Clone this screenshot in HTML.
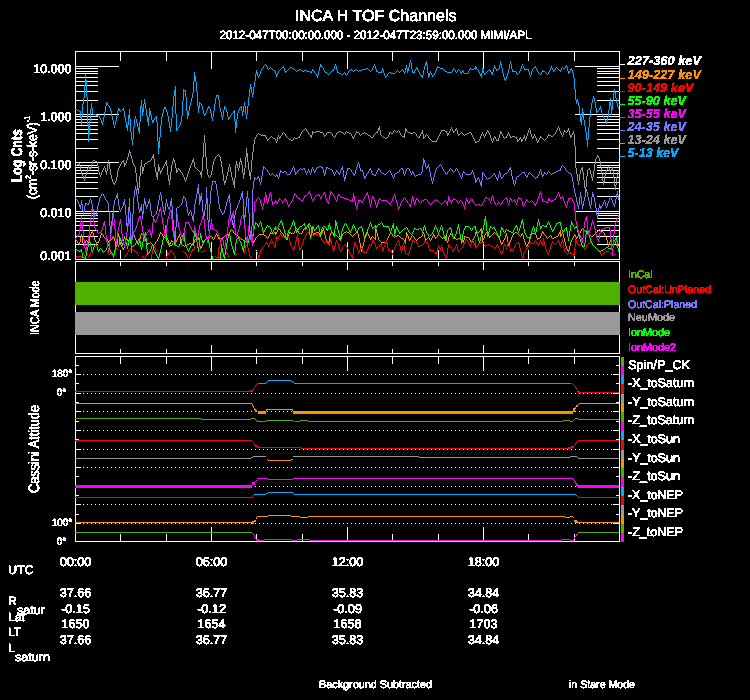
<!DOCTYPE html>
<html lang="en">
<head>
<meta charset="utf-8">
<title>INCA H TOF Channels</title>
<style>
html,body{margin:0;padding:0;background:#000;}
body{width:750px;height:700px;overflow:hidden;}
svg{display:block;}
svg text{text-rendering:geometricPrecision;font-family:"Liberation Sans",sans-serif;fill:#fff;stroke:#fff;stroke-width:0.7px;stroke-linejoin:round;}
svg text.bi{font-weight:bold;font-style:italic;stroke-width:0.3px;}
svg text.b{font-weight:bold;stroke-width:0.6px;}
.crisp{shape-rendering:crispEdges;}
.data path{fill:none;stroke-width:1;stroke-linecap:butt;}
</style>
</head>
<body>
<svg width="750" height="700" viewBox="0 0 750 700">
<rect width="750" height="700" fill="#000"/>
<g class="crisp" id="axes">
<rect x="75" y="51" width="545" height="1" fill="#fff"/>
<rect x="75" y="259" width="545" height="1" fill="#fff"/>
<rect x="75" y="51" width="1" height="209" fill="#fff"/>
<rect x="619" y="51" width="1" height="209" fill="#fff"/>
<rect x="120" y="51" width="1" height="10" fill="#fff"/>
<rect x="120" y="250" width="1" height="10" fill="#fff"/>
<rect x="166" y="51" width="1" height="10" fill="#fff"/>
<rect x="166" y="250" width="1" height="10" fill="#fff"/>
<rect x="211" y="51" width="1" height="18" fill="#fff"/>
<rect x="211" y="242" width="1" height="18" fill="#fff"/>
<rect x="256" y="51" width="1" height="10" fill="#fff"/>
<rect x="256" y="250" width="1" height="10" fill="#fff"/>
<rect x="302" y="51" width="1" height="10" fill="#fff"/>
<rect x="302" y="250" width="1" height="10" fill="#fff"/>
<rect x="347" y="51" width="1" height="18" fill="#fff"/>
<rect x="347" y="242" width="1" height="18" fill="#fff"/>
<rect x="392" y="51" width="1" height="10" fill="#fff"/>
<rect x="392" y="250" width="1" height="10" fill="#fff"/>
<rect x="438" y="51" width="1" height="10" fill="#fff"/>
<rect x="438" y="250" width="1" height="10" fill="#fff"/>
<rect x="483" y="51" width="1" height="18" fill="#fff"/>
<rect x="483" y="242" width="1" height="18" fill="#fff"/>
<rect x="528" y="51" width="1" height="10" fill="#fff"/>
<rect x="528" y="250" width="1" height="10" fill="#fff"/>
<rect x="574" y="51" width="1" height="10" fill="#fff"/>
<rect x="574" y="250" width="1" height="10" fill="#fff"/>
<rect x="75" y="261" width="545" height="1" fill="#fff"/>
<rect x="75" y="353" width="545" height="1" fill="#fff"/>
<rect x="75" y="261" width="1" height="93" fill="#fff"/>
<rect x="619" y="261" width="1" height="93" fill="#fff"/>
<rect x="120" y="261" width="1" height="5" fill="#fff"/>
<rect x="120" y="349" width="1" height="5" fill="#fff"/>
<rect x="166" y="261" width="1" height="5" fill="#fff"/>
<rect x="166" y="349" width="1" height="5" fill="#fff"/>
<rect x="211" y="261" width="1" height="9" fill="#fff"/>
<rect x="211" y="345" width="1" height="9" fill="#fff"/>
<rect x="256" y="261" width="1" height="5" fill="#fff"/>
<rect x="256" y="349" width="1" height="5" fill="#fff"/>
<rect x="302" y="261" width="1" height="5" fill="#fff"/>
<rect x="302" y="349" width="1" height="5" fill="#fff"/>
<rect x="347" y="261" width="1" height="9" fill="#fff"/>
<rect x="347" y="345" width="1" height="9" fill="#fff"/>
<rect x="392" y="261" width="1" height="5" fill="#fff"/>
<rect x="392" y="349" width="1" height="5" fill="#fff"/>
<rect x="438" y="261" width="1" height="5" fill="#fff"/>
<rect x="438" y="349" width="1" height="5" fill="#fff"/>
<rect x="483" y="261" width="1" height="9" fill="#fff"/>
<rect x="483" y="345" width="1" height="9" fill="#fff"/>
<rect x="528" y="261" width="1" height="5" fill="#fff"/>
<rect x="528" y="349" width="1" height="5" fill="#fff"/>
<rect x="574" y="261" width="1" height="5" fill="#fff"/>
<rect x="574" y="349" width="1" height="5" fill="#fff"/>
<rect x="75" y="356" width="545" height="1" fill="#fff"/>
<rect x="75" y="541" width="545" height="1" fill="#fff"/>
<rect x="75" y="356" width="1" height="186" fill="#fff"/>
<rect x="619" y="356" width="1" height="186" fill="#fff"/>
<rect x="120" y="356" width="1" height="8" fill="#fff"/>
<rect x="120" y="534" width="1" height="8" fill="#fff"/>
<rect x="166" y="356" width="1" height="8" fill="#fff"/>
<rect x="166" y="534" width="1" height="8" fill="#fff"/>
<rect x="211" y="356" width="1" height="15" fill="#fff"/>
<rect x="211" y="527" width="1" height="15" fill="#fff"/>
<rect x="256" y="356" width="1" height="8" fill="#fff"/>
<rect x="256" y="534" width="1" height="8" fill="#fff"/>
<rect x="302" y="356" width="1" height="8" fill="#fff"/>
<rect x="302" y="534" width="1" height="8" fill="#fff"/>
<rect x="347" y="356" width="1" height="15" fill="#fff"/>
<rect x="347" y="527" width="1" height="15" fill="#fff"/>
<rect x="392" y="356" width="1" height="8" fill="#fff"/>
<rect x="392" y="534" width="1" height="8" fill="#fff"/>
<rect x="438" y="356" width="1" height="8" fill="#fff"/>
<rect x="438" y="534" width="1" height="8" fill="#fff"/>
<rect x="483" y="356" width="1" height="15" fill="#fff"/>
<rect x="483" y="527" width="1" height="15" fill="#fff"/>
<rect x="528" y="356" width="1" height="8" fill="#fff"/>
<rect x="528" y="534" width="1" height="8" fill="#fff"/>
<rect x="574" y="356" width="1" height="8" fill="#fff"/>
<rect x="574" y="534" width="1" height="8" fill="#fff"/>
<rect x="75" y="66" width="44" height="1" fill="#fff"/>
<rect x="575" y="66" width="45" height="1" fill="#fff"/>
<rect x="75" y="100" width="23" height="1" fill="#fff"/>
<rect x="597" y="100" width="23" height="1" fill="#fff"/>
<rect x="75" y="91" width="23" height="1" fill="#fff"/>
<rect x="597" y="91" width="23" height="1" fill="#fff"/>
<rect x="75" y="85" width="23" height="1" fill="#fff"/>
<rect x="597" y="85" width="23" height="1" fill="#fff"/>
<rect x="75" y="81" width="23" height="1" fill="#fff"/>
<rect x="597" y="81" width="23" height="1" fill="#fff"/>
<rect x="75" y="77" width="23" height="1" fill="#fff"/>
<rect x="597" y="77" width="23" height="1" fill="#fff"/>
<rect x="75" y="73" width="23" height="1" fill="#fff"/>
<rect x="597" y="73" width="23" height="1" fill="#fff"/>
<rect x="75" y="71" width="23" height="1" fill="#fff"/>
<rect x="597" y="71" width="23" height="1" fill="#fff"/>
<rect x="75" y="68" width="23" height="1" fill="#fff"/>
<rect x="597" y="68" width="23" height="1" fill="#fff"/>
<rect x="75" y="114" width="44" height="1" fill="#fff"/>
<rect x="575" y="114" width="45" height="1" fill="#fff"/>
<rect x="75" y="148" width="23" height="1" fill="#fff"/>
<rect x="597" y="148" width="23" height="1" fill="#fff"/>
<rect x="75" y="139" width="23" height="1" fill="#fff"/>
<rect x="597" y="139" width="23" height="1" fill="#fff"/>
<rect x="75" y="133" width="23" height="1" fill="#fff"/>
<rect x="597" y="133" width="23" height="1" fill="#fff"/>
<rect x="75" y="129" width="23" height="1" fill="#fff"/>
<rect x="597" y="129" width="23" height="1" fill="#fff"/>
<rect x="75" y="125" width="23" height="1" fill="#fff"/>
<rect x="597" y="125" width="23" height="1" fill="#fff"/>
<rect x="75" y="122" width="23" height="1" fill="#fff"/>
<rect x="597" y="122" width="23" height="1" fill="#fff"/>
<rect x="75" y="119" width="23" height="1" fill="#fff"/>
<rect x="597" y="119" width="23" height="1" fill="#fff"/>
<rect x="75" y="116" width="23" height="1" fill="#fff"/>
<rect x="597" y="116" width="23" height="1" fill="#fff"/>
<rect x="75" y="162" width="44" height="1" fill="#fff"/>
<rect x="575" y="162" width="45" height="1" fill="#fff"/>
<rect x="75" y="196" width="23" height="1" fill="#fff"/>
<rect x="597" y="196" width="23" height="1" fill="#fff"/>
<rect x="75" y="188" width="23" height="1" fill="#fff"/>
<rect x="597" y="188" width="23" height="1" fill="#fff"/>
<rect x="75" y="182" width="23" height="1" fill="#fff"/>
<rect x="597" y="182" width="23" height="1" fill="#fff"/>
<rect x="75" y="177" width="23" height="1" fill="#fff"/>
<rect x="597" y="177" width="23" height="1" fill="#fff"/>
<rect x="75" y="173" width="23" height="1" fill="#fff"/>
<rect x="597" y="173" width="23" height="1" fill="#fff"/>
<rect x="75" y="170" width="23" height="1" fill="#fff"/>
<rect x="597" y="170" width="23" height="1" fill="#fff"/>
<rect x="75" y="167" width="23" height="1" fill="#fff"/>
<rect x="597" y="167" width="23" height="1" fill="#fff"/>
<rect x="75" y="165" width="23" height="1" fill="#fff"/>
<rect x="597" y="165" width="23" height="1" fill="#fff"/>
<rect x="75" y="211" width="44" height="1" fill="#fff"/>
<rect x="575" y="211" width="45" height="1" fill="#fff"/>
<rect x="75" y="244" width="23" height="1" fill="#fff"/>
<rect x="597" y="244" width="23" height="1" fill="#fff"/>
<rect x="75" y="236" width="23" height="1" fill="#fff"/>
<rect x="597" y="236" width="23" height="1" fill="#fff"/>
<rect x="75" y="230" width="23" height="1" fill="#fff"/>
<rect x="597" y="230" width="23" height="1" fill="#fff"/>
<rect x="75" y="225" width="23" height="1" fill="#fff"/>
<rect x="597" y="225" width="23" height="1" fill="#fff"/>
<rect x="75" y="221" width="23" height="1" fill="#fff"/>
<rect x="597" y="221" width="23" height="1" fill="#fff"/>
<rect x="75" y="218" width="23" height="1" fill="#fff"/>
<rect x="597" y="218" width="23" height="1" fill="#fff"/>
<rect x="75" y="215" width="23" height="1" fill="#fff"/>
<rect x="597" y="215" width="23" height="1" fill="#fff"/>
<rect x="75" y="213" width="23" height="1" fill="#fff"/>
<rect x="597" y="213" width="23" height="1" fill="#fff"/>
<rect x="75" y="365" width="4" height="1" fill="#fff"/>
<rect x="616" y="365" width="4" height="1" fill="#fff"/>
<rect x="75" y="374" width="6" height="1" fill="#fff"/>
<rect x="613" y="374" width="7" height="1" fill="#fff"/>
<rect x="75" y="383" width="4" height="1" fill="#fff"/>
<rect x="616" y="383" width="4" height="1" fill="#fff"/>
<rect x="75" y="393" width="6" height="1" fill="#fff"/>
<rect x="613" y="393" width="7" height="1" fill="#fff"/>
<rect x="75" y="402" width="4" height="1" fill="#fff"/>
<rect x="616" y="402" width="4" height="1" fill="#fff"/>
<rect x="75" y="411" width="6" height="1" fill="#fff"/>
<rect x="613" y="411" width="7" height="1" fill="#fff"/>
<rect x="75" y="421" width="4" height="1" fill="#fff"/>
<rect x="616" y="421" width="4" height="1" fill="#fff"/>
<rect x="75" y="430" width="6" height="1" fill="#fff"/>
<rect x="613" y="430" width="7" height="1" fill="#fff"/>
<rect x="75" y="439" width="4" height="1" fill="#fff"/>
<rect x="616" y="439" width="4" height="1" fill="#fff"/>
<rect x="75" y="449" width="6" height="1" fill="#fff"/>
<rect x="613" y="449" width="7" height="1" fill="#fff"/>
<rect x="75" y="458" width="4" height="1" fill="#fff"/>
<rect x="616" y="458" width="4" height="1" fill="#fff"/>
<rect x="75" y="467" width="6" height="1" fill="#fff"/>
<rect x="613" y="467" width="7" height="1" fill="#fff"/>
<rect x="75" y="476" width="4" height="1" fill="#fff"/>
<rect x="616" y="476" width="4" height="1" fill="#fff"/>
<rect x="75" y="486" width="6" height="1" fill="#fff"/>
<rect x="613" y="486" width="7" height="1" fill="#fff"/>
<rect x="75" y="495" width="4" height="1" fill="#fff"/>
<rect x="616" y="495" width="4" height="1" fill="#fff"/>
<rect x="75" y="504" width="6" height="1" fill="#fff"/>
<rect x="613" y="504" width="7" height="1" fill="#fff"/>
<rect x="75" y="514" width="4" height="1" fill="#fff"/>
<rect x="616" y="514" width="4" height="1" fill="#fff"/>
<rect x="75" y="523" width="6" height="1" fill="#fff"/>
<rect x="613" y="523" width="7" height="1" fill="#fff"/>
<rect x="75" y="532" width="4" height="1" fill="#fff"/>
<rect x="616" y="532" width="4" height="1" fill="#fff"/>
</g>
<g class="crisp" id="mode">
<rect x="75" y="282" width="545" height="23" fill="#50b000"/>
<rect x="75" y="312" width="545" height="23" fill="#999999"/>
</g>
<g class="crisp" id="dots" stroke="#fff" stroke-width="1" stroke-dasharray="1 3">
<line x1="83" y1="374.5" x2="613" y2="374.5"/>
<line x1="83" y1="393.5" x2="613" y2="393.5"/>
<line x1="83" y1="411.5" x2="613" y2="411.5"/>
<line x1="83" y1="430.5" x2="613" y2="430.5"/>
<line x1="83" y1="449.5" x2="613" y2="449.5"/>
<line x1="83" y1="467.5" x2="613" y2="467.5"/>
<line x1="83" y1="486.5" x2="613" y2="486.5"/>
<line x1="83" y1="504.5" x2="613" y2="504.5"/>
<line x1="83" y1="523.5" x2="613" y2="523.5"/>
</g>
<g class="crisp" id="attitude">
<rect x="75" y="391" width="175" height="1" fill="#ff0000"/>
<rect x="250" y="390" width="3" height="2" fill="#ff0000"/>
<rect x="253" y="388" width="1" height="2" fill="#ff0000"/>
<rect x="254" y="387" width="1" height="1" fill="#ff0000"/>
<rect x="255" y="385" width="1" height="2" fill="#ff0000"/>
<rect x="256" y="384" width="1" height="1" fill="#ff0000"/>
<rect x="257" y="383" width="2" height="1" fill="#ff0000"/>
<rect x="259" y="383" width="7" height="1" fill="#00aaff"/>
<rect x="266" y="382" width="1" height="1" fill="#00aaff"/>
<rect x="267" y="381" width="1" height="1" fill="#00aaff"/>
<rect x="268" y="380" width="23" height="1" fill="#00aaff"/>
<rect x="291" y="381" width="2" height="1" fill="#00aaff"/>
<rect x="293" y="382" width="1" height="1" fill="#00aaff"/>
<rect x="294" y="383" width="277" height="1" fill="#00aaff"/>
<rect x="572" y="383" width="1" height="1" fill="#ff0000"/>
<rect x="573" y="384" width="1" height="1" fill="#ff0000"/>
<rect x="574" y="385" width="1" height="1" fill="#ff0000"/>
<rect x="575" y="386" width="1" height="2" fill="#ff0000"/>
<rect x="576" y="388" width="1" height="1" fill="#ff0000"/>
<rect x="577" y="390" width="1" height="2" fill="#ff0000"/>
<rect x="578" y="391" width="2" height="2" fill="#ff0000"/>
<rect x="580" y="392" width="39" height="1" fill="#ff0000"/>
<rect x="75" y="403" width="177" height="1" fill="#ff9000"/>
<rect x="252" y="404" width="1" height="2" fill="#ff9000"/>
<rect x="253" y="406" width="1" height="2" fill="#ff9000"/>
<rect x="254" y="408" width="1" height="2" fill="#ff9000"/>
<rect x="255" y="409" width="1" height="3" fill="#ff9000"/>
<rect x="256" y="410" width="1" height="2" fill="#ff9000"/>
<rect x="258" y="411" width="8" height="3" fill="#ff9000"/>
<rect x="266" y="409" width="1" height="2" fill="#ff9000"/>
<rect x="267" y="409" width="25" height="1" fill="#ff9000"/>
<rect x="292" y="409" width="1" height="2" fill="#ff9000"/>
<rect x="293" y="411" width="280" height="3" fill="#ff9000"/>
<rect x="573" y="408" width="2" height="4" fill="#ff9000"/>
<rect x="575" y="407" width="1" height="2" fill="#ff9000"/>
<rect x="576" y="405" width="2" height="2" fill="#ff9000"/>
<rect x="578" y="404" width="1" height="1" fill="#ff9000"/>
<rect x="579" y="403" width="40" height="1" fill="#ff9000"/>
<rect x="75" y="418" width="126" height="1" fill="#50b000"/>
<rect x="201" y="419" width="50" height="1" fill="#50b000"/>
<rect x="251" y="418" width="4" height="1" fill="#50b000"/>
<rect x="255" y="419" width="1" height="1" fill="#50b000"/>
<rect x="256" y="420" width="1" height="1" fill="#50b000"/>
<rect x="257" y="421" width="6" height="1" fill="#50b000"/>
<rect x="263" y="421" width="2" height="1" fill="#ff00ff"/>
<rect x="265" y="421" width="1" height="1" fill="#50b000"/>
<rect x="266" y="420" width="27" height="1" fill="#50b000"/>
<rect x="293" y="421" width="1" height="1" fill="#50b000"/>
<rect x="295" y="421" width="5" height="1" fill="#50b000"/>
<rect x="300" y="420" width="8" height="1" fill="#50b000"/>
<rect x="308" y="421" width="255" height="1" fill="#50b000"/>
<rect x="563" y="420" width="7" height="1" fill="#50b000"/>
<rect x="570" y="421" width="3" height="1" fill="#50b000"/>
<rect x="573" y="420" width="1" height="1" fill="#50b000"/>
<rect x="574" y="419" width="1" height="1" fill="#50b000"/>
<rect x="575" y="418" width="3" height="1" fill="#50b000"/>
<rect x="578" y="419" width="41" height="1" fill="#50b000"/>
<rect x="75" y="440" width="177" height="1" fill="#ff0000"/>
<rect x="252" y="441" width="1" height="1" fill="#ff0000"/>
<rect x="253" y="442" width="1" height="1" fill="#ff0000"/>
<rect x="254" y="443" width="1" height="2" fill="#ff0000"/>
<rect x="255" y="445" width="2" height="2" fill="#ff0000"/>
<rect x="257" y="446" width="2" height="2" fill="#ff0000"/>
<rect x="259" y="447" width="42" height="1" fill="#ff0000"/>
<rect x="301" y="448" width="267" height="1" fill="#ff0000"/>
<rect x="568" y="447" width="3" height="2" fill="#ff0000"/>
<rect x="571" y="446" width="3" height="2" fill="#ff0000"/>
<rect x="574" y="445" width="1" height="1" fill="#ff0000"/>
<rect x="575" y="443" width="1" height="2" fill="#ff0000"/>
<rect x="576" y="442" width="1" height="1" fill="#ff0000"/>
<rect x="577" y="441" width="1" height="1" fill="#ff0000"/>
<rect x="578" y="440" width="41" height="1" fill="#ff0000"/>
<rect x="75" y="458" width="176" height="1" fill="#999999"/>
<rect x="251" y="457" width="2" height="1" fill="#999999"/>
<rect x="253" y="456" width="13" height="1" fill="#999999"/>
<rect x="267" y="459" width="1" height="1" fill="#ff9000"/>
<rect x="268" y="460" width="23" height="1" fill="#ff9000"/>
<rect x="291" y="459" width="2" height="1" fill="#ff9000"/>
<rect x="293" y="456" width="126" height="1" fill="#999999"/>
<rect x="419" y="457" width="151" height="1" fill="#999999"/>
<rect x="570" y="456" width="7" height="1" fill="#999999"/>
<rect x="577" y="457" width="1" height="1" fill="#999999"/>
<rect x="578" y="458" width="41" height="1" fill="#999999"/>
<rect x="75" y="485" width="177" height="3" fill="#ff00ff"/>
<rect x="252" y="482" width="3" height="3" fill="#ff00ff"/>
<rect x="255" y="481" width="1" height="1" fill="#ff00ff"/>
<rect x="256" y="480" width="1" height="1" fill="#ff00ff"/>
<rect x="257" y="478" width="11" height="1" fill="#ff00ff"/>
<rect x="268" y="479" width="25" height="1" fill="#ff00ff"/>
<rect x="293" y="478" width="280" height="1" fill="#ff00ff"/>
<rect x="573" y="479" width="1" height="1" fill="#ff00ff"/>
<rect x="574" y="480" width="1" height="2" fill="#ff00ff"/>
<rect x="575" y="482" width="1" height="2" fill="#ff00ff"/>
<rect x="576" y="483" width="1" height="3" fill="#ff00ff"/>
<rect x="577" y="484" width="1" height="3" fill="#ff00ff"/>
<rect x="578" y="485" width="41" height="3" fill="#ff00ff"/>
<rect x="75" y="497" width="177" height="1" fill="#ff0000"/>
<rect x="252" y="496" width="1" height="1" fill="#ff0000"/>
<rect x="253" y="495" width="1" height="1" fill="#ff0000"/>
<rect x="254" y="494" width="12" height="1" fill="#00aaff"/>
<rect x="266" y="493" width="2" height="1" fill="#00aaff"/>
<rect x="268" y="492" width="25" height="1" fill="#00aaff"/>
<rect x="293" y="493" width="1" height="1" fill="#00aaff"/>
<rect x="294" y="494" width="282" height="1" fill="#00aaff"/>
<rect x="576" y="495" width="1" height="1" fill="#00aaff"/>
<rect x="577" y="496" width="1" height="1" fill="#ff0000"/>
<rect x="578" y="497" width="41" height="1" fill="#ff0000"/>
<rect x="75" y="522" width="177" height="1" fill="#ff9000"/>
<rect x="252" y="521" width="2" height="3" fill="#ff9000"/>
<rect x="254" y="520" width="2" height="2" fill="#ff9000"/>
<rect x="256" y="517" width="1" height="2" fill="#ff9000"/>
<rect x="257" y="516" width="11" height="1" fill="#ff9000"/>
<rect x="268" y="515" width="23" height="1" fill="#ff9000"/>
<rect x="291" y="516" width="9" height="1" fill="#ff9000"/>
<rect x="300" y="517" width="8" height="1" fill="#ff9000"/>
<rect x="308" y="516" width="257" height="1" fill="#ff9000"/>
<rect x="565" y="517" width="5" height="1" fill="#ff9000"/>
<rect x="570" y="516" width="3" height="1" fill="#ff9000"/>
<rect x="573" y="517" width="1" height="1" fill="#ff9000"/>
<rect x="574" y="520" width="3" height="2" fill="#ff9000"/>
<rect x="575" y="521" width="3" height="2" fill="#ff9000"/>
<rect x="578" y="522" width="41" height="1" fill="#ff9000"/>
<rect x="75" y="532" width="177" height="1" fill="#50b000"/>
<rect x="252" y="533" width="1" height="1" fill="#ff00ff"/>
<rect x="253" y="534" width="1" height="1" fill="#ff00ff"/>
<rect x="254" y="535" width="1" height="2" fill="#ff00ff"/>
<rect x="255" y="537" width="1" height="2" fill="#ff00ff"/>
<rect x="256" y="539" width="3" height="2" fill="#ff00ff"/>
<rect x="259" y="540" width="5" height="1" fill="#ff00ff"/>
<rect x="264" y="539" width="28" height="1" fill="#ff00ff"/>
<rect x="292" y="540" width="5" height="1" fill="#ff00ff"/>
<rect x="297" y="539" width="13" height="1" fill="#ff00ff"/>
<rect x="310" y="540" width="251" height="1" fill="#ff00ff"/>
<rect x="561" y="539" width="9" height="1" fill="#ff00ff"/>
<rect x="570" y="540" width="3" height="1" fill="#ff00ff"/>
<rect x="573" y="539" width="1" height="1" fill="#ff00ff"/>
<rect x="574" y="537" width="1" height="2" fill="#ff00ff"/>
<rect x="575" y="536" width="1" height="1" fill="#ff00ff"/>
<rect x="576" y="534" width="1" height="2" fill="#ff00ff"/>
<rect x="577" y="533" width="1" height="1" fill="#ff00ff"/>
<rect x="578" y="532" width="41" height="1" fill="#50b000"/>
<rect x="75" y="367" width="1" height="1" fill="#ff00ff"/>
</g>
<g class="crisp" id="bar">
<rect x="621" y="357" width="3" height="9" fill="#50b000"/>
<rect x="621" y="366" width="3" height="9" fill="#ff00ff"/>
<rect x="621" y="375" width="3" height="9" fill="#00aaff"/>
<rect x="621" y="384" width="3" height="10" fill="#ff0000"/>
<rect x="621" y="394" width="3" height="9" fill="#999999"/>
<rect x="621" y="403" width="3" height="9" fill="#ff9000"/>
<rect x="621" y="412" width="3" height="10" fill="#50b000"/>
<rect x="621" y="422" width="3" height="9" fill="#ff00ff"/>
<rect x="621" y="431" width="3" height="9" fill="#00aaff"/>
<rect x="621" y="440" width="3" height="10" fill="#ff0000"/>
<rect x="621" y="450" width="3" height="9" fill="#999999"/>
<rect x="621" y="459" width="3" height="9" fill="#ff9000"/>
<rect x="621" y="468" width="3" height="9" fill="#50b000"/>
<rect x="621" y="477" width="3" height="10" fill="#ff00ff"/>
<rect x="621" y="487" width="3" height="9" fill="#00aaff"/>
<rect x="621" y="496" width="3" height="9" fill="#ff0000"/>
<rect x="621" y="505" width="3" height="10" fill="#999999"/>
<rect x="621" y="515" width="3" height="9" fill="#ff9000"/>
<rect x="621" y="524" width="3" height="9" fill="#50b000"/>
<rect x="621" y="533" width="3" height="9" fill="#ff00ff"/>
</g>
<g class="crisp data" id="tof">
<path d="M75.5 239v1M76.5 240v1M77.5 241v2M78.5 243v1M79.5 242v3M80.5 237v5M81.5 234v3M82.5 237v6M83.5 243v3M84.5 243v2M85.5 241v2M86.5 240v1M87.5 241v1M88.5 241v2M89.5 237v4M90.5 234v3M91.5 232v2M92.5 230v3M93.5 233v4M94.5 237v3M95.5 240v2M96.5 242v2M97.5 242v1M98.5 241v2M99.5 238v3M100.5 235v3M101.5 233v2M102.5 234v1M103.5 235v2M104.5 237v1M105.5 238v1M106.5 238v1M107.5 239v2M108.5 241v2M109.5 241v1M110.5 240v1M111.5 239v1M112.5 237v2M113.5 236v2M114.5 238v3M115.5 241v4M116.5 243v4M117.5 237v6M118.5 233v4M119.5 236v6M120.5 242v3M121.5 245v2M122.5 247v2M123.5 248v2M124.5 244v4M125.5 240v4M126.5 238v2M127.5 239v2M128.5 241v1M129.5 240v1M130.5 239v1M131.5 237v2M132.5 235v2M133.5 233v2M134.5 235v3M135.5 238v2M136.5 240v2M137.5 242v2M138.5 243v2M139.5 239v4M140.5 235v4M141.5 233v2M142.5 234v1M143.5 235v2M144.5 237v2M145.5 239v2M146.5 241v2M147.5 243v2M148.5 243v1M149.5 243v1M150.5 242v1M151.5 243v1M152.5 244v1M153.5 245v1M154.5 244v1M155.5 242v2M156.5 241v1M157.5 239v2M158.5 237v2M159.5 234v3M160.5 232v2M161.5 233v1M162.5 234v2M163.5 236v1M164.5 237v1M165.5 236v1M166.5 236v2M167.5 238v2M168.5 240v3M169.5 243v2M170.5 242v2M171.5 240v2M172.5 241v1M173.5 242v1M174.5 242v1M175.5 242v1M176.5 240v2M177.5 238v2M178.5 236v2M179.5 234v3M180.5 237v5M181.5 242v3M182.5 245v1M183.5 245v1M184.5 246v1M185.5 245v1M186.5 245v1M187.5 244v1M188.5 244v1M189.5 243v1M190.5 243v1M191.5 244v1M192.5 244v1M193.5 243v3M194.5 240v3M195.5 239v1M196.5 238v1M197.5 238v1M198.5 237v3M199.5 240v6M200.5 246v3M201.5 246v2M202.5 244v2M203.5 242v2M204.5 240v2M205.5 239v1M206.5 238v1M207.5 238v1M208.5 237v1M209.5 237v1M210.5 236v1M211.5 236v1M212.5 237v2M213.5 239v1M214.5 237v2M215.5 235v2M216.5 233v2M217.5 235v2M218.5 237v2M219.5 238v1M220.5 238v1M221.5 238v1M222.5 238v1M223.5 237v1M224.5 236v1M225.5 235v1M226.5 235v1M227.5 234v1M228.5 234v1M229.5 232v2M230.5 230v2M231.5 229v1M232.5 230v1M233.5 231v2M234.5 233v1M235.5 234v1M236.5 234v1M237.5 235v1M238.5 236v1M239.5 237v1M240.5 238v1M241.5 239v1M242.5 239v1M243.5 240v1M244.5 240v1M245.5 241v1M246.5 241v1M247.5 240v1M248.5 239v1M249.5 238v1M250.5 237v1M251.5 236v2M252.5 238v3M253.5 241v2M254.5 240v2M255.5 238v2M256.5 237v1M257.5 236v1M258.5 235v1M259.5 234v1M260.5 234v1M261.5 234v1M262.5 234v1M263.5 234v1M264.5 235v1M265.5 235v1M266.5 236v2M267.5 238v1M268.5 236v2M269.5 234v2M270.5 232v2M271.5 233v1M272.5 233v1M273.5 233v1M274.5 232v1M275.5 232v3M276.5 232v2M277.5 230v2M278.5 228v2M279.5 229v1M280.5 230v2M281.5 232v1M282.5 233v1M283.5 234v2M284.5 236v1M285.5 237v1M286.5 238v1M287.5 238v2M288.5 234v4M289.5 232v2M290.5 232v1M291.5 233v1M292.5 233v1M293.5 233v1M294.5 231v2M295.5 229v2M296.5 228v1M297.5 229v2M298.5 231v2M299.5 233v1M300.5 233v1M301.5 233v1M302.5 231v2M303.5 229v2M304.5 228v1M305.5 227v1M306.5 227v1M307.5 226v1M308.5 224v2M309.5 223v2M310.5 225v2M311.5 227v3M312.5 230v3M313.5 233v2M314.5 233v1M315.5 233v1M316.5 232v1M317.5 232v1M318.5 232v1M319.5 233v2M320.5 235v2M321.5 233v2M322.5 230v3M323.5 228v3M324.5 231v4M325.5 235v4M326.5 239v2M327.5 241v2M328.5 242v3M329.5 236v6M330.5 233v3M331.5 232v1M332.5 232v1M333.5 233v1M334.5 233v1M335.5 234v1M336.5 235v1M337.5 236v1M338.5 237v1M339.5 238v2M340.5 239v2M341.5 236v3M342.5 234v2M343.5 233v1M344.5 232v1M345.5 232v1M346.5 231v1M347.5 232v1M348.5 232v1M349.5 233v1M350.5 234v1M351.5 235v1M352.5 236v1M353.5 235v1M354.5 234v1M355.5 233v1M356.5 232v1M357.5 231v3M358.5 234v4M359.5 238v5M360.5 243v6M361.5 249v3M362.5 246v4M363.5 242v4M364.5 238v4M365.5 236v2M366.5 234v2M367.5 232v2M368.5 234v2M369.5 236v2M370.5 238v2M371.5 237v2M372.5 236v1M373.5 237v1M374.5 238v1M375.5 227v13M376.5 229v4M377.5 233v4M378.5 237v3M379.5 240v1M380.5 241v1M381.5 242v1M382.5 242v1M383.5 242v1M384.5 242v1M385.5 242v1M386.5 240v2M387.5 238v2M388.5 236v2M389.5 234v2M390.5 232v2M391.5 233v1M392.5 234v2M393.5 236v1M394.5 237v1M395.5 236v1M396.5 236v1M397.5 235v1M398.5 235v1M399.5 236v1M400.5 237v1M401.5 238v1M402.5 238v1M403.5 239v1M404.5 240v2M405.5 238v6M406.5 232v6M407.5 234v2M408.5 236v3M409.5 239v2M410.5 238v2M411.5 236v2M412.5 235v1M413.5 236v1M414.5 237v2M415.5 239v1M416.5 240v1M417.5 239v1M418.5 238v1M419.5 237v1M420.5 237v1M421.5 236v1M422.5 234v2M423.5 232v2M424.5 234v4M425.5 238v3M426.5 239v1M427.5 238v1M428.5 237v1M429.5 238v2M430.5 240v1M431.5 238v2M432.5 236v2M433.5 234v2M434.5 235v2M435.5 237v2M436.5 237v1M437.5 235v2M438.5 234v1M439.5 235v1M440.5 236v1M441.5 237v1M442.5 238v1M443.5 237v1M444.5 237v1M445.5 236v2M446.5 238v3M447.5 241v2M448.5 237v4M449.5 235v2M450.5 233v2M451.5 234v1M452.5 235v2M453.5 237v1M454.5 238v1M455.5 238v1M456.5 239v1M457.5 239v1M458.5 238v1M459.5 238v1M460.5 238v1M461.5 239v1M462.5 240v2M463.5 240v3M464.5 236v4M465.5 236v1M466.5 237v1M467.5 237v1M468.5 237v1M469.5 238v2M470.5 240v2M471.5 242v1M472.5 240v2M473.5 238v2M474.5 236v2M475.5 232v4M476.5 232v1M477.5 232v1M478.5 232v1M479.5 231v1M480.5 229v2M481.5 228v7M482.5 235v7M483.5 238v2M484.5 235v3M485.5 233v2M486.5 232v1M487.5 232v2M488.5 234v2M489.5 236v2M490.5 236v1M491.5 235v1M492.5 234v1M493.5 233v1M494.5 232v1M495.5 233v1M496.5 234v1M497.5 235v1M498.5 236v2M499.5 238v2M500.5 240v3M501.5 243v2M502.5 242v2M503.5 240v2M504.5 238v2M505.5 235v3M506.5 233v3M507.5 236v6M508.5 242v4M509.5 242v2M510.5 240v2M511.5 237v3M512.5 235v2M513.5 233v2M514.5 233v1M515.5 232v1M516.5 232v1M517.5 233v1M518.5 234v1M519.5 235v1M520.5 236v1M521.5 234v2M522.5 233v2M523.5 235v4M524.5 239v3M525.5 242v3M526.5 245v2M527.5 244v2M528.5 242v2M529.5 239v3M530.5 235v4M531.5 233v2M532.5 233v1M533.5 233v1M534.5 233v1M535.5 233v2M536.5 235v3M537.5 238v2M538.5 238v1M539.5 238v1M540.5 236v2M541.5 233v3M542.5 231v2M543.5 232v2M544.5 234v1M545.5 235v1M546.5 236v2M547.5 238v1M548.5 237v1M549.5 236v1M550.5 235v1M551.5 236v2M552.5 238v1M553.5 238v1M554.5 237v1M555.5 237v1M556.5 236v1M557.5 236v1M558.5 234v2M559.5 232v2M560.5 230v7M561.5 234v2M562.5 232v2M563.5 234v4M564.5 238v4M565.5 242v4M566.5 246v3M567.5 249v2M568.5 250v2M569.5 246v4M570.5 242v4M571.5 240v2M572.5 238v2M573.5 236v2M574.5 234v2M575.5 235v2M576.5 237v2M577.5 236v2M578.5 234v2M579.5 233v1M580.5 231v2M581.5 229v2M582.5 228v1M583.5 229v1M584.5 230v1M585.5 231v1M586.5 232v1M587.5 233v1M588.5 234v1M589.5 235v1M590.5 235v1M591.5 236v1M592.5 236v1M593.5 235v1M594.5 234v1M595.5 233v1M596.5 232v1M597.5 231v1M598.5 230v1M599.5 229v1M600.5 230v1M601.5 231v1M602.5 231v1M603.5 232v1M604.5 233v2M605.5 235v2M606.5 237v3M607.5 240v4M608.5 244v3M609.5 242v3M610.5 240v2M611.5 242v2M612.5 244v2M613.5 242v2M614.5 240v2M615.5 242v2M616.5 244v2M617.5 245v1M618.5 245v1" stroke="#ff9000"/>
<path d="M76.5 256v1M77.5 256v1M78.5 256v1M79.5 256v1M80.5 256v1M81.5 257v1M82.5 254v1M82.5 257v1M83.5 252v2M84.5 254v2M88.5 256v1M89.5 255v1M90.5 253v2M91.5 250v3M92.5 251v2M107.5 251v1M108.5 252v2M109.5 254v1M110.5 252v2M111.5 253v2M112.5 255v1M113.5 254v1M114.5 252v2M115.5 250v2M116.5 248v2M117.5 249v1M118.5 249v1M124.5 257v1M125.5 255v2M126.5 254v1M127.5 252v2M128.5 250v2M129.5 249v1M130.5 248v1M132.5 249v1M133.5 250v1M134.5 250v1M135.5 251v1M136.5 252v1M137.5 253v2M138.5 255v1M142.5 256v1M143.5 257v1M144.5 258v1M145.5 256v2M146.5 254v2M147.5 253v1M148.5 252v1M151.5 254v5M152.5 249v5M153.5 247v2M154.5 246v2M155.5 248v2M156.5 250v1M157.5 251v1M166.5 256v3M167.5 252v4M168.5 253v2M169.5 252v2M170.5 250v2M171.5 251v1M172.5 252v1M173.5 253v2M174.5 255v2M175.5 257v2M183.5 251v1M184.5 252v1M185.5 253v1M186.5 254v2M187.5 256v2M188.5 258v1M189.5 256v2M190.5 253v3M191.5 251v2M192.5 249v2M193.5 249v2M194.5 246v3M201.5 252v1M202.5 251v1M203.5 251v1M204.5 250v1M215.5 256v1M216.5 257v1M217.5 257v1M218.5 248v11M219.5 246v2M220.5 244v2M221.5 246v4M222.5 250v3M223.5 253v2M224.5 253v1M225.5 253v1M226.5 252v1M227.5 253v2M228.5 255v2M234.5 252v1M235.5 253v1M236.5 254v1M244.5 250v4M245.5 246v4M246.5 245v1M247.5 245v3M248.5 248v4M249.5 252v4M250.5 256v2M255.5 250v1M256.5 251v1M257.5 252v3M258.5 255v4M259.5 253v4M260.5 250v3M261.5 249v1M262.5 247v2M263.5 246v1M264.5 245v1M265.5 243v2M266.5 242v1M267.5 243v2M268.5 245v2M269.5 244v2M270.5 241v3M271.5 239v2M272.5 241v2M273.5 243v2M274.5 245v2M275.5 241v7M276.5 236v5M277.5 237v1M278.5 237v2M279.5 235v2M280.5 233v2M281.5 234v2M282.5 236v1M283.5 237v1M284.5 237v1M285.5 238v1M286.5 237v1M287.5 237v1M288.5 236v2M289.5 238v4M290.5 242v3M291.5 245v2M292.5 247v2M293.5 249v2M294.5 245v4M295.5 241v4M296.5 237v4M297.5 234v4M298.5 238v8M299.5 246v5M300.5 248v2M301.5 245v3M302.5 242v3M303.5 239v3M304.5 237v2M305.5 235v2M306.5 233v2M307.5 232v1M308.5 232v1M309.5 233v1M310.5 234v2M311.5 236v1M312.5 235v1M313.5 235v1M314.5 234v1M315.5 234v1M316.5 234v1M317.5 234v1M318.5 234v1M319.5 235v2M320.5 237v1M321.5 238v2M322.5 240v2M323.5 242v1M324.5 242v1M325.5 242v1M326.5 242v1M327.5 242v1M328.5 243v2M329.5 242v4M330.5 238v4M331.5 241v4M332.5 245v4M333.5 249v3M334.5 246v4M335.5 242v4M336.5 240v2M337.5 242v2M338.5 244v3M339.5 247v3M340.5 250v2M341.5 249v2M342.5 247v2M343.5 246v1M344.5 245v1M345.5 244v1M346.5 245v2M347.5 247v2M348.5 249v2M349.5 251v2M350.5 253v2M351.5 255v2M352.5 255v4M353.5 247v8M354.5 242v5M355.5 243v2M356.5 245v2M357.5 247v4M358.5 251v2M359.5 250v2M360.5 248v2M361.5 246v2M362.5 248v3M363.5 251v2M364.5 252v1M365.5 252v1M366.5 251v2M367.5 249v2M368.5 246v3M369.5 244v2M370.5 245v1M371.5 243v3M372.5 239v4M373.5 240v2M374.5 242v2M375.5 244v3M376.5 247v2M377.5 247v1M378.5 246v1M379.5 245v1M380.5 244v1M381.5 243v4M382.5 247v5M383.5 247v3M384.5 245v2M385.5 242v3M386.5 240v3M387.5 243v5M388.5 248v3M389.5 250v1M390.5 250v1M391.5 251v2M392.5 253v2M393.5 249v4M394.5 247v2M395.5 245v2M396.5 243v2M397.5 241v2M398.5 240v2M399.5 242v4M400.5 246v4M401.5 250v3M402.5 245v5M403.5 242v3M404.5 245v6M405.5 251v3M406.5 253v1M407.5 254v1M408.5 253v2M409.5 250v3M410.5 247v3M411.5 243v4M412.5 240v3M413.5 240v1M414.5 241v1M415.5 241v1M416.5 241v2M417.5 243v2M418.5 245v2M419.5 246v1M420.5 245v1M421.5 245v1M422.5 245v1M423.5 243v2M424.5 241v2M425.5 241v1M426.5 242v1M427.5 242v2M428.5 244v4M429.5 248v3M430.5 250v1M431.5 250v1M432.5 250v1M433.5 251v1M434.5 252v1M435.5 253v1M436.5 252v3M437.5 248v4M438.5 245v3M439.5 247v2M440.5 248v3M441.5 245v3M442.5 247v4M443.5 251v2M444.5 253v2M445.5 255v2M446.5 255v4M447.5 248v7M448.5 244v4M449.5 245v1M450.5 246v1M451.5 247v2M452.5 249v2M453.5 250v2M454.5 248v2M455.5 246v2M456.5 244v2M457.5 246v4M458.5 250v2M459.5 250v1M460.5 249v1M461.5 248v1M462.5 246v2M463.5 244v2M464.5 242v2M465.5 240v2M466.5 239v1M467.5 240v2M468.5 242v2M469.5 244v2M470.5 245v2M471.5 241v4M472.5 239v2M473.5 241v3M474.5 243v3M475.5 240v9M476.5 246v2M477.5 245v1M478.5 243v2M479.5 242v1M480.5 242v1M481.5 242v1M482.5 242v1M483.5 243v1M484.5 244v2M485.5 246v1M486.5 245v1M487.5 245v1M488.5 244v1M489.5 244v1M490.5 245v1M491.5 246v1M492.5 246v1M493.5 247v1M494.5 248v1M495.5 247v1M496.5 245v2M497.5 244v2M498.5 246v2M499.5 248v3M500.5 251v2M501.5 253v2M502.5 250v3M503.5 246v4M504.5 244v2M505.5 245v2M506.5 247v2M507.5 244v3M508.5 242v2M509.5 244v4M510.5 248v3M511.5 250v1M512.5 250v1M513.5 248v2M514.5 246v2M515.5 244v2M516.5 243v1M517.5 243v1M518.5 242v2M519.5 244v4M520.5 248v4M521.5 252v4M522.5 256v3M523.5 253v4M524.5 251v2M525.5 250v1M526.5 248v2M527.5 247v1M528.5 245v2M529.5 242v3M530.5 242v1M531.5 243v1M532.5 243v1M533.5 243v1M534.5 241v2M535.5 240v1M536.5 241v2M537.5 243v2M538.5 244v2M539.5 242v2M540.5 240v2M541.5 242v2M542.5 242v4M543.5 238v4M544.5 241v4M545.5 245v4M546.5 249v3M547.5 252v2M548.5 253v2M549.5 250v3M550.5 246v4M551.5 243v3M552.5 241v2M553.5 242v1M554.5 243v1M555.5 244v1M556.5 243v1M557.5 241v2M558.5 240v2M559.5 242v3M560.5 244v3M561.5 241v3M562.5 239v3M563.5 242v6M564.5 248v4M565.5 252v1M566.5 253v1M567.5 254v1M568.5 253v1M569.5 253v1M570.5 252v1M571.5 253v1M572.5 254v1M573.5 254v1M574.5 247v9M575.5 238v9M576.5 240v3M577.5 243v2M578.5 244v1M579.5 245v1M580.5 245v1M581.5 245v1M582.5 246v1M583.5 247v1M584.5 248v1M585.5 248v2M586.5 246v2M587.5 244v2M588.5 243v1M589.5 243v1M590.5 242v1M591.5 243v1M592.5 244v1M593.5 245v1M594.5 246v1M595.5 247v1M596.5 248v1M597.5 249v1M598.5 250v1M599.5 251v1M600.5 252v2M601.5 254v2M602.5 254v1M603.5 253v1M604.5 252v1M605.5 251v1M606.5 251v1M607.5 251v1M608.5 251v1M609.5 252v1M610.5 253v1M611.5 254v1M612.5 255v1M613.5 255v1M614.5 254v1M615.5 254v1" stroke="#ff0000"/>
<path d="M75.5 248v1M76.5 249v1M77.5 250v1M78.5 250v1M79.5 251v1M80.5 250v1M81.5 249v4M82.5 253v5M83.5 257v1M84.5 258v1M85.5 256v3M86.5 251v5M87.5 247v4M88.5 243v4M89.5 240v3M90.5 242v4M91.5 246v4M92.5 250v2M93.5 247v3M94.5 245v2M95.5 244v1M96.5 244v2M97.5 246v4M98.5 250v2M99.5 249v2M100.5 248v1M101.5 249v1M102.5 250v2M103.5 252v1M104.5 251v1M105.5 250v1M106.5 248v2M107.5 246v2M108.5 244v2M109.5 246v4M110.5 250v2M111.5 252v1M112.5 253v2M113.5 255v3M114.5 250v5M115.5 245v5M116.5 242v3M117.5 243v2M118.5 245v2M119.5 241v4M120.5 238v3M121.5 240v4M122.5 243v3M123.5 239v4M124.5 236v3M125.5 238v4M126.5 242v4M127.5 246v3M128.5 240v6M129.5 237v3M130.5 240v4M131.5 244v3M132.5 246v1M133.5 245v1M134.5 245v1M135.5 243v2M136.5 242v1M137.5 241v1M138.5 239v2M139.5 238v3M140.5 241v6M141.5 247v3M142.5 242v5M143.5 238v4M144.5 234v4M145.5 232v6M146.5 238v11M147.5 249v6M148.5 253v1M149.5 251v2M150.5 249v2M151.5 246v3M152.5 244v2M153.5 246v4M154.5 250v2M155.5 252v2M156.5 254v2M157.5 256v2M158.5 257v2M159.5 253v4M160.5 249v4M161.5 245v4M162.5 240v5M163.5 236v4M164.5 230v6M165.5 225v8M166.5 233v8M167.5 241v2M168.5 243v2M169.5 245v2M170.5 245v1M171.5 245v1M172.5 243v2M173.5 242v1M174.5 243v2M175.5 245v1M176.5 245v1M177.5 246v1M178.5 246v1M179.5 244v2M180.5 242v2M181.5 239v3M182.5 235v4M183.5 233v3M184.5 236v6M185.5 242v4M186.5 246v2M187.5 248v2M188.5 250v2M189.5 248v2M190.5 246v2M191.5 245v1M192.5 243v2M193.5 237v6M194.5 231v6M195.5 233v4M196.5 237v5M197.5 242v6M198.5 247v5M199.5 238v9M200.5 233v5M201.5 236v4M202.5 240v3M203.5 241v1M204.5 240v1M205.5 239v1M206.5 238v1M207.5 237v2M208.5 239v4M209.5 243v5M210.5 248v4M211.5 252v4M212.5 256v3M220.5 252v7M221.5 244v8M222.5 248v5M223.5 253v4M224.5 255v4M225.5 249v6M226.5 243v6M227.5 238v5M228.5 235v3M229.5 233v3M230.5 236v6M231.5 242v4M232.5 246v3M233.5 249v4M234.5 251v4M235.5 243v8M236.5 239v4M237.5 238v1M238.5 237v2M239.5 239v2M240.5 241v2M241.5 243v3M242.5 246v4M243.5 248v4M244.5 240v8M245.5 236v4M246.5 238v4M247.5 242v3M248.5 239v4M249.5 235v4M250.5 233v2M251.5 235v4M252.5 236v5M253.5 229v7M254.5 225v4M255.5 222v3M256.5 223v1M257.5 224v2M258.5 225v2M259.5 223v2M260.5 221v2M261.5 223v4M262.5 227v4M263.5 231v3M264.5 230v2M265.5 228v2M266.5 226v2M267.5 225v1M268.5 226v1M269.5 226v1M270.5 227v2M271.5 229v3M272.5 232v2M273.5 230v2M274.5 228v2M275.5 226v4M276.5 228v1M277.5 227v1M278.5 225v2M279.5 223v2M280.5 221v2M281.5 220v2M282.5 222v4M283.5 226v3M284.5 229v4M285.5 233v4M286.5 237v3M287.5 233v4M288.5 230v3M289.5 229v1M290.5 227v2M291.5 225v2M292.5 222v3M293.5 220v2M294.5 222v4M295.5 226v4M296.5 230v3M297.5 230v2M298.5 228v2M299.5 227v1M300.5 226v1M301.5 226v1M302.5 225v1M303.5 224v1M304.5 223v3M305.5 226v4M306.5 227v2M307.5 225v2M308.5 224v4M309.5 228v7M310.5 235v4M311.5 230v6M312.5 226v4M313.5 227v2M314.5 229v2M315.5 229v1M316.5 227v2M317.5 226v1M318.5 225v3M319.5 228v4M320.5 232v3M321.5 229v4M322.5 227v2M323.5 226v1M324.5 226v1M325.5 227v1M326.5 228v2M327.5 229v2M328.5 225v4M329.5 223v3M330.5 226v4M331.5 230v3M332.5 233v1M333.5 234v2M334.5 229v8M335.5 220v9M336.5 222v4M337.5 226v4M338.5 230v3M339.5 233v4M340.5 236v3M341.5 231v5M342.5 228v3M343.5 226v2M344.5 224v2M345.5 223v1M346.5 224v2M347.5 226v2M348.5 228v2M349.5 230v2M350.5 231v2M351.5 229v2M352.5 226v3M353.5 224v2M354.5 226v2M355.5 228v3M356.5 231v2M357.5 230v2M358.5 228v2M359.5 227v1M360.5 227v1M361.5 226v2M362.5 228v4M363.5 232v4M364.5 236v2M365.5 234v2M366.5 232v2M367.5 229v3M368.5 227v2M369.5 224v3M370.5 222v2M371.5 224v3M372.5 227v2M373.5 227v1M374.5 226v1M375.5 225v4M376.5 226v2M377.5 225v1M378.5 224v1M379.5 224v1M380.5 223v1M381.5 222v1M382.5 223v2M383.5 225v2M384.5 226v1M385.5 226v1M386.5 226v1M387.5 226v1M388.5 226v2M389.5 228v3M390.5 231v2M391.5 228v3M392.5 225v3M393.5 223v6M394.5 229v7M395.5 229v4M396.5 226v3M397.5 228v2M398.5 230v2M399.5 232v2M400.5 232v1M401.5 231v1M402.5 230v1M403.5 229v1M404.5 228v1M405.5 228v1M406.5 227v1M407.5 228v2M408.5 230v2M409.5 232v1M410.5 233v1M411.5 234v1M412.5 232v2M413.5 230v2M414.5 228v2M415.5 228v1M416.5 229v1M417.5 229v1M418.5 229v1M419.5 228v1M420.5 228v1M421.5 229v2M422.5 231v2M423.5 227v4M424.5 225v2M425.5 227v4M426.5 231v2M427.5 233v1M428.5 234v2M429.5 236v1M430.5 235v1M431.5 234v1M432.5 232v2M433.5 230v2M434.5 227v3M435.5 225v2M436.5 227v2M437.5 229v3M438.5 232v2M439.5 230v2M440.5 227v3M441.5 225v2M442.5 227v4M443.5 231v4M444.5 235v4M445.5 238v3M446.5 233v5M447.5 230v3M448.5 229v1M449.5 228v1M450.5 227v2M451.5 229v4M452.5 233v4M453.5 237v2M454.5 236v2M455.5 234v2M456.5 231v3M457.5 227v4M458.5 224v4M459.5 228v6M460.5 234v6M461.5 240v4M462.5 234v6M463.5 230v4M464.5 228v2M465.5 226v2M466.5 226v1M467.5 226v1M468.5 226v1M469.5 227v1M470.5 228v2M471.5 230v1M472.5 228v2M473.5 227v1M474.5 226v1M475.5 226v4M476.5 230v4M477.5 234v3M478.5 237v4M479.5 241v2M480.5 237v4M481.5 234v3M482.5 230v4M483.5 225v5M484.5 219v6M485.5 216v5M486.5 221v10M487.5 231v6M488.5 232v3M489.5 228v4M490.5 226v2M491.5 227v1M492.5 228v1M493.5 227v1M494.5 227v2M495.5 229v2M496.5 231v2M497.5 233v2M498.5 235v2M499.5 236v3M500.5 230v6M501.5 227v3M502.5 228v2M503.5 230v2M504.5 232v1M505.5 230v2M506.5 229v1M507.5 230v1M508.5 230v1M509.5 231v1M510.5 231v1M511.5 232v1M512.5 232v1M513.5 230v2M514.5 228v2M515.5 226v2M516.5 225v2M517.5 227v4M518.5 231v2M519.5 228v3M520.5 225v3M521.5 221v4M522.5 219v4M523.5 223v6M524.5 229v4M525.5 233v2M526.5 235v2M527.5 237v1M528.5 237v1M529.5 237v2M530.5 234v3M531.5 231v3M532.5 228v3M533.5 226v2M534.5 228v4M535.5 232v3M536.5 227v5M537.5 222v5M538.5 219v3M539.5 222v4M540.5 226v3M541.5 226v2M542.5 225v1M543.5 225v1M544.5 226v1M545.5 226v1M546.5 225v2M547.5 223v2M548.5 221v2M549.5 223v2M550.5 225v3M551.5 228v2M552.5 230v2M553.5 229v2M554.5 227v2M555.5 225v2M556.5 223v2M557.5 223v1M558.5 222v1M559.5 222v1M560.5 222v4M561.5 226v4M562.5 230v3M563.5 231v1M564.5 229v2M565.5 228v1M566.5 227v4M567.5 231v6M568.5 237v4M569.5 231v6M570.5 225v6M571.5 221v4M572.5 223v2M573.5 225v2M574.5 227v2M575.5 227v1M576.5 226v2M577.5 228v4M578.5 232v3M579.5 235v4M580.5 239v3M581.5 242v3M582.5 245v2M583.5 246v1M584.5 243v4M585.5 235v8M586.5 230v5M587.5 231v2M588.5 233v2M589.5 235v3M590.5 238v3M591.5 241v2M592.5 243v2M593.5 245v1M594.5 246v1M595.5 247v1M596.5 248v1M597.5 249v1M598.5 250v1M599.5 251v1M600.5 251v1M601.5 250v1M602.5 250v1M603.5 249v1M604.5 249v1M605.5 248v1M606.5 247v1M607.5 247v1M608.5 248v1M609.5 248v1M610.5 248v1M611.5 246v2M612.5 244v2M613.5 242v2M614.5 240v2M615.5 238v2M616.5 237v4M617.5 241v7M618.5 248v4" stroke="#00ff00"/>
<path d="M75.5 238v1M76.5 237v1M77.5 235v2M78.5 234v1M79.5 229v5M80.5 221v8M81.5 216v5M82.5 221v10M83.5 231v9M84.5 240v8M85.5 248v4M86.5 246v4M87.5 242v4M88.5 235v7M89.5 225v10M90.5 217v8M91.5 209v8M92.5 205v6M93.5 211v11M94.5 222v6M95.5 228v2M96.5 230v1M97.5 231v2M98.5 233v1M99.5 232v1M100.5 232v1M101.5 230v2M102.5 227v3M103.5 223v4M104.5 221v5M105.5 226v9M106.5 235v7M107.5 242v6M108.5 248v4M109.5 240v8M110.5 233v7M111.5 226v7M112.5 218v8M113.5 213v6M114.5 219v10M115.5 229v10M116.5 239v6M117.5 231v8M118.5 227v4M119.5 222v5M120.5 219v5M121.5 224v10M122.5 234v7M123.5 241v4M124.5 244v3M125.5 238v6M126.5 232v6M127.5 226v6M128.5 221v5M129.5 218v6M130.5 224v11M131.5 235v6M132.5 236v3M133.5 232v4M134.5 230v2M135.5 228v2M136.5 225v3M137.5 222v3M138.5 218v4M139.5 216v2M140.5 216v4M141.5 220v6M142.5 226v6M143.5 232v6M144.5 238v3M145.5 235v4M146.5 233v2M147.5 232v1M148.5 230v2M149.5 229v2M150.5 231v4M151.5 233v5M152.5 223v10M153.5 217v6M154.5 219v2M155.5 221v2M156.5 219v2M157.5 216v3M158.5 213v3M159.5 209v4M160.5 207v4M161.5 211v6M162.5 217v7M163.5 224v6M164.5 230v6M165.5 234v5M166.5 225v9M167.5 219v6M168.5 216v3M169.5 212v4M170.5 210v2M171.5 210v9M172.5 219v12M173.5 231v6M174.5 237v5M175.5 227v18M176.5 209v18M177.5 214v8M178.5 222v6M179.5 228v3M180.5 231v4M181.5 235v2M182.5 237v2M183.5 236v5M184.5 227v9M185.5 222v5M186.5 222v1M187.5 222v1M188.5 222v2M189.5 224v2M190.5 226v2M191.5 228v2M192.5 230v2M193.5 230v3M194.5 226v4M195.5 229v4M196.5 233v4M197.5 236v4M198.5 230v6M199.5 225v5M200.5 223v2M201.5 220v3M202.5 216v4M203.5 214v5M204.5 219v10M205.5 229v7M206.5 236v4M207.5 240v3M208.5 236v4M209.5 230v6M210.5 223v7M211.5 219v5M212.5 224v5M213.5 229v1M214.5 229v1M215.5 230v1M216.5 230v1M217.5 231v2M218.5 233v3M219.5 236v4M220.5 240v3M221.5 239v2M222.5 237v3M223.5 240v6M224.5 246v3M225.5 240v6M226.5 234v6M227.5 227v7M228.5 219v8M229.5 215v4M230.5 218v4M231.5 217v3M232.5 213v4M233.5 211v8M234.5 219v10M235.5 229v5M236.5 234v3M237.5 232v3M238.5 229v3M239.5 225v4M240.5 219v6M241.5 216v3M242.5 215v1M243.5 214v5M244.5 219v10M245.5 229v8M246.5 237v6M247.5 236v10M248.5 226v10M249.5 228v4M250.5 232v4M251.5 236v6M252.5 234v12M253.5 212v22M254.5 202v10M255.5 201v1M256.5 199v2M257.5 198v1M258.5 197v1M259.5 198v2M260.5 200v3M261.5 203v4M262.5 207v3M263.5 203v4M264.5 197v6M265.5 192v5M266.5 195v6M267.5 201v3M268.5 198v4M269.5 194v4M270.5 192v3M271.5 195v6M272.5 201v4M273.5 203v1M274.5 202v1M275.5 200v2M276.5 201v2M277.5 202v2M278.5 200v2M279.5 198v2M280.5 199v1M281.5 200v1M282.5 201v2M283.5 201v1M284.5 199v2M285.5 198v2M286.5 200v2M287.5 202v3M288.5 205v2M289.5 204v2M290.5 203v1M291.5 201v2M292.5 199v2M293.5 196v3M294.5 193v3M295.5 194v1M296.5 195v2M297.5 197v1M298.5 198v1M299.5 198v1M300.5 199v1M301.5 200v1M302.5 200v2M303.5 198v2M304.5 196v2M305.5 195v1M306.5 195v1M307.5 194v1M308.5 192v2M309.5 191v2M310.5 193v3M311.5 196v3M312.5 199v2M313.5 199v1M314.5 197v2M315.5 196v1M316.5 195v1M317.5 195v1M318.5 194v1M319.5 195v2M320.5 197v2M321.5 196v2M322.5 195v1M323.5 193v2M324.5 192v2M325.5 194v4M326.5 198v3M327.5 201v2M328.5 201v3M329.5 195v6M330.5 191v4M331.5 192v1M332.5 193v1M333.5 194v2M334.5 196v2M335.5 198v2M336.5 200v2M337.5 196v4M338.5 194v2M339.5 195v1M340.5 196v1M341.5 197v1M342.5 197v1M343.5 197v1M344.5 198v1M345.5 198v1M346.5 198v1M347.5 199v1M348.5 199v1M349.5 200v1M350.5 200v1M351.5 201v1M352.5 198v4M353.5 193v5M354.5 196v5M355.5 201v5M356.5 206v3M357.5 203v4M358.5 200v3M359.5 200v1M360.5 200v1M361.5 201v1M362.5 201v2M363.5 199v2M364.5 197v2M365.5 195v2M366.5 193v2M367.5 192v3M368.5 195v4M369.5 199v5M370.5 204v3M371.5 199v5M372.5 196v3M373.5 197v2M374.5 199v2M375.5 201v4M376.5 205v3M377.5 203v3M378.5 200v3M379.5 198v2M380.5 199v1M381.5 200v1M382.5 200v1M383.5 200v1M384.5 200v1M385.5 200v1M386.5 200v1M387.5 201v1M388.5 202v1M389.5 203v1M390.5 203v2M391.5 201v2M392.5 198v3M393.5 196v2M394.5 194v2M395.5 196v4M396.5 200v3M397.5 203v4M398.5 207v3M399.5 206v2M400.5 203v3M401.5 201v2M402.5 200v1M403.5 198v2M404.5 197v1M405.5 198v2M406.5 200v1M407.5 201v2M408.5 203v1M409.5 204v2M410.5 204v3M411.5 199v5M412.5 196v3M413.5 198v4M414.5 202v3M415.5 200v3M416.5 198v2M417.5 199v1M418.5 200v2M419.5 202v1M420.5 203v1M421.5 201v2M422.5 200v1M423.5 200v1M424.5 199v1M425.5 199v1M426.5 199v1M427.5 200v2M428.5 202v1M429.5 203v1M430.5 204v1M431.5 203v1M432.5 202v1M433.5 201v1M434.5 200v1M435.5 199v1M436.5 200v1M437.5 200v1M438.5 201v1M439.5 202v1M440.5 203v1M441.5 204v1M442.5 203v1M443.5 202v1M444.5 201v1M445.5 200v2M446.5 202v2M447.5 201v5M448.5 196v5M449.5 198v2M450.5 200v2M451.5 202v2M452.5 200v2M453.5 198v2M454.5 199v1M455.5 199v1M456.5 200v1M457.5 201v2M458.5 203v1M459.5 201v2M460.5 200v1M461.5 201v1M462.5 202v2M463.5 204v2M464.5 206v3M465.5 201v5M466.5 198v3M467.5 200v2M468.5 202v2M469.5 201v2M470.5 199v2M471.5 198v1M472.5 199v2M473.5 201v2M474.5 203v1M475.5 204v2M476.5 205v1M477.5 204v1M478.5 204v1M479.5 204v1M480.5 205v1M481.5 205v1M482.5 203v2M483.5 201v2M484.5 199v2M485.5 197v2M486.5 197v1M487.5 198v1M488.5 198v1M489.5 199v2M490.5 201v2M491.5 197v4M492.5 195v2M493.5 197v4M494.5 201v2M495.5 203v2M496.5 205v1M497.5 203v2M498.5 202v1M499.5 203v1M500.5 204v1M501.5 203v1M502.5 201v2M503.5 200v1M504.5 199v1M505.5 198v1M506.5 197v2M507.5 199v4M508.5 203v2M509.5 200v3M510.5 198v2M511.5 199v2M512.5 201v1M513.5 200v1M514.5 199v2M515.5 201v2M516.5 203v2M517.5 199v4M518.5 197v2M519.5 198v1M520.5 198v1M521.5 199v2M522.5 201v4M523.5 205v2M524.5 203v2M525.5 201v2M526.5 199v2M527.5 200v1M528.5 201v1M529.5 202v1M530.5 201v1M531.5 200v1M532.5 201v1M533.5 202v1M534.5 203v2M535.5 204v2M536.5 202v2M537.5 199v3M538.5 196v3M539.5 193v3M540.5 191v3M541.5 194v4M542.5 198v3M543.5 201v1M544.5 201v1M545.5 201v1M546.5 202v1M547.5 201v2M548.5 198v3M549.5 199v1M550.5 200v1M551.5 201v1M552.5 200v1M553.5 200v1M554.5 199v1M555.5 198v2M556.5 196v2M557.5 194v2M558.5 192v2M559.5 194v3M560.5 197v2M561.5 197v1M562.5 196v2M563.5 198v3M564.5 201v2M565.5 203v3M566.5 205v3M567.5 201v4M568.5 198v3M569.5 198v1M570.5 198v1M571.5 198v1M572.5 199v2M573.5 201v2M574.5 203v8M575.5 211v10M576.5 221v4M577.5 225v5M578.5 230v3M579.5 233v2M580.5 235v3M581.5 238v3M582.5 238v5M583.5 228v10M584.5 221v7M585.5 218v3M586.5 216v5M587.5 221v9M588.5 230v5M589.5 230v3M590.5 227v3M591.5 223v4M592.5 220v3M593.5 222v3M594.5 225v4M595.5 229v5M596.5 234v4M597.5 238v2M598.5 239v3M599.5 233v6M600.5 230v3M601.5 229v1M602.5 229v1M603.5 228v1M604.5 228v1M605.5 227v1M606.5 227v1M607.5 227v1M608.5 227v1M609.5 227v3M610.5 230v9M611.5 239v11M612.5 248v8M613.5 234v14M614.5 225v9M615.5 222v3M616.5 219v3M617.5 217v2M618.5 215v2" stroke="#ff00ff"/>
<path d="M75.5 198v1M76.5 199v1M77.5 200v2M78.5 202v2M79.5 204v3M80.5 205v4M81.5 200v5M82.5 204v7M83.5 211v4M84.5 206v6M85.5 203v3M86.5 203v1M87.5 204v1M88.5 203v2M89.5 200v3M90.5 198v2M91.5 200v4M92.5 204v5M93.5 209v5M94.5 214v3M95.5 215v1M96.5 212v3M97.5 206v6M98.5 202v4M99.5 198v4M100.5 196v2M101.5 194v2M102.5 193v1M103.5 194v2M104.5 196v2M105.5 198v2M106.5 200v1M107.5 201v2M108.5 203v8M109.5 211v15M110.5 226v8M111.5 221v8M112.5 213v8M113.5 205v8M114.5 200v5M115.5 198v2M116.5 195v3M117.5 193v6M118.5 199v7M119.5 206v4M120.5 210v2M121.5 208v2M122.5 206v2M123.5 202v4M124.5 199v6M125.5 205v10M126.5 215v11M127.5 223v9M128.5 207v16M129.5 198v14M130.5 212v27M131.5 239v14M132.5 214v26M133.5 197v17M134.5 190v7M135.5 186v4M136.5 189v6M137.5 195v7M138.5 202v7M139.5 209v4M140.5 207v4M141.5 204v7M142.5 211v8M143.5 204v10M144.5 198v6M145.5 201v5M146.5 206v3M147.5 204v3M148.5 201v3M149.5 199v4M150.5 203v8M151.5 211v5M152.5 216v1M153.5 216v1M154.5 215v1M155.5 214v1M156.5 211v3M157.5 205v6M158.5 200v5M159.5 195v5M160.5 192v3M161.5 195v6M162.5 201v6M163.5 207v5M164.5 211v4M165.5 203v8M166.5 199v4M167.5 203v4M168.5 207v2M169.5 207v3M170.5 201v6M171.5 198v8M172.5 206v14M173.5 220v11M174.5 231v10M175.5 227v19M176.5 208v19M177.5 207v1M178.5 207v1M179.5 206v1M180.5 205v1M181.5 203v2M182.5 199v4M183.5 196v3M184.5 197v1M185.5 198v3M186.5 201v6M187.5 207v6M188.5 213v3M189.5 212v2M190.5 210v2M191.5 212v4M192.5 216v4M193.5 214v8M194.5 204v10M195.5 199v5M196.5 194v5M197.5 188v6M198.5 184v10M199.5 194v11M200.5 196v6M201.5 193v7M202.5 200v12M203.5 212v7M204.5 210v6M205.5 204v6M206.5 187v17M207.5 198v22M208.5 220v11M209.5 204v18M210.5 191v13M211.5 185v6M212.5 181v4M213.5 181v1M214.5 181v1M215.5 181v3M216.5 184v6M217.5 190v6M218.5 196v8M219.5 204v5M220.5 209v2M221.5 211v2M222.5 213v2M223.5 213v1M224.5 210v3M225.5 206v4M226.5 202v4M227.5 199v3M228.5 196v3M229.5 194v9M230.5 203v12M231.5 215v5M232.5 220v5M233.5 223v5M234.5 215v8M235.5 210v5M236.5 208v2M237.5 205v3M238.5 203v2M239.5 200v3M240.5 197v3M241.5 193v4M242.5 191v8M243.5 199v16M244.5 215v8M245.5 207v10M246.5 197v10M247.5 191v7M248.5 198v15M249.5 213v18M250.5 231v9M251.5 226v9M252.5 189v37M253.5 181v8M254.5 177v4M255.5 178v1M256.5 179v1M257.5 177v2M258.5 176v2M259.5 178v4M260.5 182v3M261.5 176v6M262.5 170v6M263.5 166v4M264.5 167v1M265.5 168v1M266.5 169v1M267.5 170v2M268.5 172v1M269.5 173v2M270.5 175v1M271.5 174v1M272.5 173v1M273.5 174v1M274.5 175v1M275.5 176v1M276.5 174v2M277.5 175v2M278.5 177v2M279.5 173v4M280.5 170v3M281.5 171v1M282.5 172v1M283.5 172v1M284.5 171v1M285.5 171v1M286.5 172v2M287.5 174v1M288.5 174v1M289.5 174v1M290.5 172v2M291.5 170v2M292.5 168v2M293.5 166v2M294.5 168v4M295.5 172v3M296.5 173v1M297.5 171v2M298.5 170v1M299.5 169v1M300.5 168v1M301.5 169v1M302.5 169v1M303.5 168v1M304.5 168v2M305.5 170v3M306.5 173v2M307.5 171v2M308.5 169v2M309.5 171v2M310.5 173v2M311.5 169v4M312.5 167v2M313.5 169v2M314.5 171v2M315.5 170v2M316.5 168v2M317.5 167v1M318.5 167v1M319.5 166v1M320.5 166v1M321.5 167v1M322.5 167v2M323.5 169v4M324.5 173v3M325.5 170v4M326.5 167v3M327.5 167v1M328.5 168v1M329.5 168v1M330.5 169v1M331.5 169v1M332.5 170v2M333.5 172v2M334.5 174v2M335.5 172v2M336.5 170v2M337.5 171v1M338.5 172v2M339.5 173v2M340.5 170v3M341.5 168v2M342.5 166v4M343.5 170v7M344.5 177v4M345.5 175v4M346.5 171v4M347.5 168v3M348.5 168v1M349.5 168v1M350.5 169v1M351.5 170v2M352.5 172v1M353.5 173v2M354.5 174v2M355.5 170v4M356.5 167v3M357.5 164v3M358.5 162v2M359.5 164v4M360.5 168v3M361.5 170v1M362.5 170v2M363.5 172v4M364.5 176v3M365.5 176v2M366.5 174v2M367.5 173v1M368.5 171v2M369.5 169v2M370.5 168v2M371.5 170v3M372.5 173v2M373.5 174v1M374.5 175v1M375.5 174v2M376.5 172v2M377.5 170v2M378.5 168v2M379.5 169v1M380.5 170v2M381.5 172v1M382.5 173v1M383.5 173v1M384.5 174v1M385.5 174v1M386.5 173v1M387.5 172v1M388.5 171v1M389.5 170v1M390.5 171v2M391.5 173v2M392.5 175v2M393.5 177v2M394.5 174v3M395.5 173v1M396.5 173v1M397.5 172v1M398.5 172v1M399.5 170v2M400.5 169v1M401.5 168v1M402.5 168v2M403.5 170v4M404.5 174v2M405.5 171v3M406.5 169v2M407.5 168v1M408.5 168v1M409.5 169v2M410.5 171v2M411.5 173v2M412.5 171v2M413.5 172v2M414.5 174v2M415.5 176v1M416.5 175v1M417.5 175v1M418.5 174v1M419.5 174v1M420.5 174v1M421.5 172v2M422.5 165v7M423.5 158v7M424.5 160v3M425.5 163v4M426.5 167v2M427.5 166v2M428.5 164v3M429.5 167v5M430.5 172v5M431.5 177v4M432.5 181v3M433.5 177v4M434.5 173v4M435.5 170v3M436.5 168v2M437.5 167v1M438.5 166v1M439.5 165v1M440.5 164v1M441.5 165v2M442.5 167v2M443.5 169v2M444.5 171v1M445.5 172v2M446.5 174v1M447.5 172v2M448.5 171v1M449.5 169v2M450.5 168v1M451.5 169v1M452.5 170v2M453.5 172v1M454.5 171v1M455.5 169v2M456.5 168v1M457.5 169v2M458.5 171v2M459.5 173v2M460.5 175v2M461.5 177v2M462.5 173v4M463.5 171v2M464.5 172v1M465.5 173v1M466.5 174v1M467.5 174v1M468.5 174v1M469.5 174v1M470.5 174v1M471.5 172v2M472.5 170v2M473.5 172v3M474.5 175v3M475.5 178v5M476.5 180v2M477.5 178v2M478.5 177v2M479.5 179v3M480.5 182v3M481.5 180v7M482.5 172v8M483.5 173v1M484.5 174v2M485.5 176v1M486.5 177v2M487.5 179v1M488.5 178v1M489.5 178v1M490.5 177v1M491.5 176v1M492.5 175v1M493.5 174v1M494.5 173v2M495.5 175v2M496.5 177v2M497.5 178v3M498.5 174v4M499.5 171v3M500.5 173v4M501.5 177v2M502.5 177v1M503.5 175v2M504.5 174v1M505.5 173v1M506.5 173v1M507.5 172v1M508.5 170v2M509.5 168v2M510.5 167v3M511.5 170v6M512.5 176v4M513.5 180v4M514.5 184v2M515.5 180v4M516.5 177v3M517.5 176v1M518.5 176v1M519.5 175v1M520.5 174v1M521.5 173v1M522.5 172v1M523.5 172v1M524.5 172v2M525.5 174v2M526.5 176v2M527.5 175v2M528.5 173v2M529.5 172v1M530.5 173v1M531.5 174v1M532.5 175v1M533.5 176v1M534.5 177v1M535.5 178v1M536.5 177v1M537.5 176v2M538.5 174v2M539.5 171v3M540.5 169v2M541.5 171v4M542.5 175v2M543.5 174v2M544.5 172v2M545.5 173v1M546.5 174v1M547.5 172v2M548.5 171v1M549.5 172v1M550.5 173v1M551.5 174v1M552.5 173v1M553.5 173v1M554.5 172v1M555.5 172v1M556.5 171v1M557.5 171v1M558.5 170v1M559.5 170v1M560.5 168v3M561.5 166v2M562.5 165v1M563.5 166v1M564.5 167v1M565.5 168v2M566.5 170v1M567.5 171v1M568.5 172v1M569.5 173v1M570.5 173v1M571.5 174v3M572.5 177v5M573.5 182v6M574.5 188v5M575.5 193v4M576.5 197v5M577.5 202v4M578.5 205v4M579.5 197v8M580.5 192v5M581.5 196v8M582.5 204v5M583.5 201v5M584.5 197v4M585.5 192v5M586.5 189v3M587.5 192v5M588.5 197v4M589.5 201v5M590.5 205v4M591.5 197v8M592.5 192v5M593.5 194v3M594.5 197v5M595.5 202v6M596.5 208v7M597.5 215v4M598.5 208v7M599.5 204v4M600.5 206v3M601.5 206v2M602.5 204v2M603.5 202v2M604.5 200v2M605.5 202v4M606.5 206v2M607.5 203v3M608.5 201v2M609.5 198v3M610.5 196v2M611.5 198v2M612.5 200v3M613.5 203v2M614.5 204v3M615.5 199v5M616.5 194v5M617.5 191v4M618.5 195v5" stroke="#7878ff"/>
<path d="M75.5 166v1M76.5 165v1M77.5 164v1M78.5 164v1M79.5 163v3M80.5 166v4M81.5 170v4M82.5 174v2M83.5 176v3M84.5 179v2M85.5 175v4M86.5 172v3M87.5 168v4M88.5 166v2M89.5 167v2M90.5 168v3M91.5 164v4M92.5 161v3M93.5 160v1M94.5 160v1M95.5 161v1M96.5 161v1M97.5 162v4M98.5 166v6M99.5 172v3M100.5 175v2M101.5 172v3M102.5 170v2M103.5 168v2M104.5 166v2M105.5 168v4M106.5 171v4M107.5 164v7M108.5 160v4M109.5 163v6M110.5 169v6M111.5 175v4M112.5 179v3M113.5 182v2M114.5 183v2M115.5 181v2M116.5 177v4M117.5 171v6M118.5 168v3M119.5 166v2M120.5 164v2M121.5 162v2M122.5 161v1M123.5 160v3M124.5 163v4M125.5 163v2M126.5 160v3M127.5 157v3M128.5 153v4M129.5 150v3M130.5 152v4M131.5 156v3M132.5 159v4M133.5 163v2M134.5 165v2M135.5 167v6M136.5 173v9M137.5 182v8M138.5 188v6M139.5 176v12M140.5 166v10M141.5 160v7M142.5 167v7M143.5 167v4M144.5 164v3M145.5 163v1M146.5 163v1M147.5 162v1M148.5 161v1M149.5 161v1M150.5 160v1M151.5 158v2M152.5 156v2M153.5 154v5M154.5 159v8M155.5 167v5M156.5 172v5M157.5 172v8M158.5 164v8M159.5 167v4M160.5 171v3M161.5 170v2M162.5 168v2M163.5 166v2M164.5 164v2M165.5 162v2M166.5 160v6M167.5 166v9M168.5 175v6M169.5 180v5M170.5 172v8M171.5 165v7M172.5 161v4M173.5 158v3M174.5 160v3M175.5 163v5M176.5 168v5M177.5 170v2M178.5 168v2M179.5 169v1M180.5 170v2M181.5 172v1M182.5 173v2M183.5 175v2M184.5 177v3M185.5 180v2M186.5 177v3M187.5 174v3M188.5 171v3M189.5 168v3M190.5 165v3M191.5 163v2M192.5 160v3M193.5 158v4M194.5 162v5M195.5 167v1M196.5 168v1M197.5 169v1M198.5 170v1M199.5 171v1M200.5 172v3M201.5 171v7M202.5 157v14M203.5 143v14M204.5 135v8M205.5 143v14M206.5 157v12M207.5 169v6M208.5 175v2M209.5 177v1M210.5 175v2M211.5 171v4M212.5 165v6M213.5 161v4M214.5 159v2M215.5 157v2M216.5 156v1M217.5 155v1M218.5 154v1M219.5 155v2M220.5 157v4M221.5 161v6M222.5 167v7M223.5 174v7M224.5 181v4M225.5 180v3M226.5 176v4M227.5 172v4M228.5 167v5M229.5 164v3M230.5 167v5M231.5 172v5M232.5 177v4M233.5 181v4M234.5 178v10M235.5 165v13M236.5 161v4M237.5 164v4M238.5 168v3M239.5 162v6M240.5 158v4M241.5 161v4M242.5 165v8M243.5 173v6M244.5 168v7M245.5 157v11M246.5 148v9M247.5 153v9M248.5 162v8M249.5 170v6M250.5 172v8M251.5 160v12M252.5 152v8M253.5 144v8M254.5 139v5M255.5 137v2M256.5 135v2M257.5 134v1M258.5 133v1M259.5 134v1M260.5 134v1M261.5 135v1M262.5 135v1M263.5 135v1M264.5 135v1M265.5 135v2M266.5 137v2M267.5 139v2M268.5 139v1M269.5 138v1M270.5 137v1M271.5 136v1M272.5 137v1M273.5 138v1M274.5 138v1M275.5 139v2M276.5 141v2M277.5 137v4M278.5 135v2M279.5 137v2M280.5 136v2M281.5 135v1M282.5 133v2M283.5 132v1M284.5 133v1M285.5 134v2M286.5 136v1M287.5 137v1M288.5 138v1M289.5 139v1M290.5 139v1M291.5 140v1M292.5 140v1M293.5 138v2M294.5 137v1M295.5 138v1M296.5 138v1M297.5 138v1M298.5 137v1M299.5 136v2M300.5 134v2M301.5 132v2M302.5 131v1M303.5 130v1M304.5 129v1M305.5 128v1M306.5 129v2M307.5 131v1M308.5 132v2M309.5 134v1M310.5 135v2M311.5 135v3M312.5 131v4M313.5 132v1M314.5 132v1M315.5 132v1M316.5 131v1M317.5 131v1M318.5 131v1M319.5 131v1M320.5 132v1M321.5 132v1M322.5 132v1M323.5 133v2M324.5 135v2M325.5 135v1M326.5 133v2M327.5 132v1M328.5 132v1M329.5 132v1M330.5 132v1M331.5 133v1M332.5 134v2M333.5 136v1M334.5 137v1M335.5 135v2M336.5 133v2M337.5 132v1M338.5 132v1M339.5 131v1M340.5 131v1M341.5 132v1M342.5 132v1M343.5 133v1M344.5 134v1M345.5 132v2M346.5 131v1M347.5 132v1M348.5 132v1M349.5 133v1M350.5 133v1M351.5 134v2M352.5 136v2M353.5 137v2M354.5 135v2M355.5 133v2M356.5 131v2M357.5 132v1M358.5 132v1M359.5 133v2M360.5 135v1M361.5 134v1M362.5 133v1M363.5 133v1M364.5 132v1M365.5 133v1M366.5 133v1M367.5 134v1M368.5 135v1M369.5 135v1M370.5 136v1M371.5 137v1M372.5 137v1M373.5 135v2M374.5 134v1M375.5 133v1M376.5 132v1M377.5 131v2M378.5 128v3M379.5 126v4M380.5 130v5M381.5 135v1M382.5 136v1M383.5 137v1M384.5 137v1M385.5 138v1M386.5 138v1M387.5 137v1M388.5 135v2M389.5 132v3M390.5 132v1M391.5 133v1M392.5 133v1M393.5 131v2M394.5 130v1M395.5 131v1M396.5 132v1M397.5 131v1M398.5 130v1M399.5 131v2M400.5 133v2M401.5 135v1M402.5 136v1M403.5 136v1M404.5 133v5M405.5 128v5M406.5 129v2M407.5 131v1M408.5 132v1M409.5 132v1M410.5 133v1M411.5 133v1M412.5 133v1M413.5 132v1M414.5 132v1M415.5 133v1M416.5 134v2M417.5 136v1M418.5 137v1M419.5 136v2M420.5 134v2M421.5 132v2M422.5 130v4M423.5 134v5M424.5 137v1M425.5 135v2M426.5 134v1M427.5 135v1M428.5 136v2M429.5 138v1M430.5 139v1M431.5 140v1M432.5 141v1M433.5 141v1M434.5 141v1M435.5 141v1M436.5 140v2M437.5 138v2M438.5 136v2M439.5 134v2M440.5 132v2M441.5 130v2M442.5 130v1M443.5 130v1M444.5 130v1M445.5 131v1M446.5 131v2M447.5 133v3M448.5 133v2M449.5 131v2M450.5 129v2M451.5 127v2M452.5 129v2M453.5 131v2M454.5 131v1M455.5 129v2M456.5 128v2M457.5 130v4M458.5 134v2M459.5 134v1M460.5 133v1M461.5 132v1M462.5 133v1M463.5 134v1M464.5 135v1M465.5 134v1M466.5 134v1M467.5 133v1M468.5 133v1M469.5 132v1M470.5 132v1M471.5 133v2M472.5 135v2M473.5 137v2M474.5 139v2M475.5 141v2M476.5 142v1M477.5 141v1M478.5 141v1M479.5 139v2M480.5 136v3M481.5 134v2M482.5 132v2M483.5 134v2M484.5 136v2M485.5 134v2M486.5 132v2M487.5 130v2M488.5 131v2M489.5 133v2M490.5 135v3M491.5 138v3M492.5 141v2M493.5 138v3M494.5 136v2M495.5 137v2M496.5 139v2M497.5 140v1M498.5 138v3M499.5 134v4M500.5 131v3M501.5 132v2M502.5 134v2M503.5 136v2M504.5 138v1M505.5 137v1M506.5 136v2M507.5 134v2M508.5 132v2M509.5 134v2M510.5 136v2M511.5 137v1M512.5 136v1M513.5 136v1M514.5 136v1M515.5 137v1M516.5 137v2M517.5 139v3M518.5 140v1M519.5 138v2M520.5 137v2M521.5 139v3M522.5 139v2M523.5 137v2M524.5 135v3M525.5 138v3M526.5 136v3M527.5 133v3M528.5 130v3M529.5 128v2M530.5 130v4M531.5 134v3M532.5 137v2M533.5 136v2M534.5 134v2M535.5 136v2M536.5 138v3M537.5 141v2M538.5 140v2M539.5 138v2M540.5 136v2M541.5 137v1M542.5 138v1M543.5 139v1M544.5 140v1M545.5 139v1M546.5 138v1M547.5 136v2M548.5 134v2M549.5 135v1M550.5 135v1M551.5 136v1M552.5 136v1M553.5 135v1M554.5 134v1M555.5 132v2M556.5 130v2M557.5 128v2M558.5 126v2M559.5 128v3M560.5 131v2M561.5 133v2M562.5 135v2M563.5 132v3M564.5 130v2M565.5 131v1M566.5 132v1M567.5 130v2M568.5 128v3M569.5 131v4M570.5 135v3M571.5 135v2M572.5 133v2M573.5 131v3M574.5 134v12M575.5 146v22M576.5 168v6M577.5 174v7M578.5 181v4M579.5 174v7M580.5 170v4M581.5 168v2M582.5 167v5M583.5 172v8M584.5 180v8M585.5 187v6M586.5 176v11M587.5 170v6M588.5 169v1M589.5 168v2M590.5 170v4M591.5 174v4M592.5 177v4M593.5 171v6M594.5 164v7M595.5 159v5M596.5 157v2M597.5 155v2M598.5 156v2M599.5 158v3M600.5 161v6M601.5 167v7M602.5 174v7M603.5 181v4M604.5 176v6M605.5 172v4M606.5 170v2M607.5 168v2M608.5 166v2M609.5 168v3M610.5 171v2M611.5 169v2M612.5 167v4M613.5 171v7M614.5 178v8M615.5 185v5M616.5 177v8M617.5 172v5M618.5 170v2" stroke="#999999"/>
<path d="M75.5 109v1M76.5 109v1M77.5 110v1M78.5 110v1M79.5 111v1M80.5 111v7M81.5 116v9M82.5 104v12M83.5 98v6M84.5 85v13M85.5 74v11M86.5 80v17M87.5 97v27M88.5 124v18M89.5 121v14M90.5 109v12M91.5 103v6M92.5 108v6M93.5 114v1M94.5 114v1M95.5 114v1M96.5 115v1M97.5 115v1M98.5 115v1M99.5 116v2M100.5 118v2M101.5 120v3M102.5 122v3M103.5 117v5M104.5 112v5M105.5 106v6M106.5 102v4M107.5 103v2M108.5 105v1M109.5 106v2M110.5 108v3M111.5 111v5M112.5 116v4M113.5 120v5M114.5 125v3M115.5 121v4M116.5 116v5M117.5 111v5M118.5 108v3M119.5 109v2M120.5 111v1M121.5 110v1M122.5 109v1M123.5 108v3M124.5 111v6M125.5 117v5M126.5 122v6M127.5 125v6M128.5 115v10M129.5 109v10M130.5 119v13M131.5 132v8M132.5 139v6M133.5 127v12M134.5 119v8M135.5 116v3M136.5 119v4M137.5 123v4M138.5 127v4M139.5 122v12M140.5 106v16M141.5 100v8M142.5 108v8M143.5 104v8M144.5 99v5M145.5 103v6M146.5 109v7M147.5 116v6M148.5 117v9M149.5 108v9M150.5 111v4M151.5 115v5M152.5 120v3M153.5 120v2M154.5 118v2M155.5 117v1M156.5 116v6M157.5 122v19M158.5 141v13M159.5 137v11M160.5 125v12M161.5 117v8M162.5 113v4M163.5 109v4M164.5 107v2M165.5 107v2M166.5 109v3M167.5 112v4M168.5 116v6M169.5 122v6M170.5 127v5M171.5 118v9M172.5 106v12M173.5 96v10M174.5 90v6M175.5 86v28M176.5 114v17M177.5 128v2M178.5 127v1M179.5 125v2M180.5 122v3M181.5 116v6M182.5 101v15M183.5 89v12M184.5 90v1M185.5 90v7M186.5 97v14M187.5 111v8M188.5 111v5M189.5 106v5M190.5 102v4M191.5 98v4M192.5 93v5M193.5 81v12M194.5 72v9M195.5 76v6M196.5 82v10M197.5 92v14M198.5 106v7M199.5 102v6M200.5 103v1M201.5 104v2M202.5 106v4M203.5 110v4M204.5 114v2M205.5 113v2M206.5 111v2M207.5 108v3M208.5 106v2M209.5 107v2M210.5 109v4M211.5 113v5M212.5 117v4M213.5 111v6M214.5 104v7M215.5 98v6M216.5 95v3M217.5 95v1M218.5 95v5M219.5 100v8M220.5 108v4M221.5 112v5M222.5 116v4M223.5 110v6M224.5 106v4M225.5 107v2M226.5 109v3M227.5 112v5M228.5 117v3M229.5 117v2M230.5 115v2M231.5 114v1M232.5 113v1M233.5 111v2M234.5 110v11M235.5 121v12M236.5 119v9M237.5 113v6M238.5 110v3M239.5 108v2M240.5 107v1M241.5 106v5M242.5 111v5M243.5 106v6M244.5 102v4M245.5 106v8M246.5 114v5M247.5 106v8M248.5 97v9M249.5 89v8M250.5 84v5M251.5 87v6M252.5 93v4M253.5 87v7M254.5 81v6M255.5 74v7M256.5 70v4M257.5 72v4M258.5 76v2M259.5 74v2M260.5 71v3M261.5 69v2M262.5 68v1M263.5 66v2M264.5 65v1M265.5 64v1M266.5 65v2M267.5 67v2M268.5 69v1M269.5 68v1M270.5 67v1M271.5 68v1M272.5 69v1M273.5 70v1M274.5 70v1M275.5 71v3M276.5 74v3M277.5 73v2M278.5 71v2M279.5 70v1M280.5 69v1M281.5 68v1M282.5 67v1M283.5 66v2M284.5 68v3M285.5 71v2M286.5 71v1M287.5 70v1M288.5 69v1M289.5 68v1M290.5 67v1M291.5 67v1M292.5 68v1M293.5 68v1M294.5 69v1M295.5 70v1M296.5 71v1M297.5 70v1M298.5 70v1M299.5 69v1M300.5 69v1M301.5 70v1M302.5 71v1M303.5 71v1M304.5 70v1M305.5 70v1M306.5 70v1M307.5 71v1M308.5 71v1M309.5 71v1M310.5 72v1M311.5 71v2M312.5 69v2M313.5 70v1M314.5 71v2M315.5 73v1M316.5 74v2M317.5 75v3M318.5 71v4M319.5 67v4M320.5 64v3M321.5 65v2M322.5 67v1M323.5 68v2M324.5 70v2M325.5 72v1M326.5 72v1M327.5 73v1M328.5 74v1M329.5 73v1M330.5 72v1M331.5 71v1M332.5 70v1M333.5 69v2M334.5 66v3M335.5 64v2M336.5 66v4M337.5 70v3M338.5 72v1M339.5 73v1M340.5 73v1M341.5 74v1M342.5 74v1M343.5 73v1M344.5 72v1M345.5 73v2M346.5 75v1M347.5 73v2M348.5 71v2M349.5 70v1M350.5 70v1M351.5 69v1M352.5 70v1M353.5 71v1M354.5 70v1M355.5 70v1M356.5 69v1M357.5 70v1M358.5 71v1M359.5 70v1M360.5 70v1M361.5 70v1M362.5 69v1M363.5 69v1M364.5 69v1M365.5 69v1M366.5 68v1M367.5 68v1M368.5 69v1M369.5 70v1M370.5 71v1M371.5 70v1M372.5 68v2M373.5 66v2M374.5 64v2M375.5 66v3M376.5 69v3M377.5 71v1M378.5 72v1M379.5 72v1M380.5 72v1M381.5 71v2M382.5 68v3M383.5 70v3M384.5 73v3M385.5 76v2M386.5 76v1M387.5 74v2M388.5 73v1M389.5 72v1M390.5 72v1M391.5 73v1M392.5 73v1M393.5 73v1M394.5 73v1M395.5 72v1M396.5 71v1M397.5 70v1M398.5 71v1M399.5 72v1M400.5 71v1M401.5 70v1M402.5 69v1M403.5 70v2M404.5 72v2M405.5 68v4M406.5 65v4M407.5 69v4M408.5 67v4M409.5 63v4M410.5 60v3M411.5 63v6M412.5 69v4M413.5 72v1M414.5 71v2M415.5 69v2M416.5 67v2M417.5 68v2M418.5 70v2M419.5 72v2M420.5 74v1M421.5 75v2M422.5 75v3M423.5 70v5M424.5 66v4M425.5 63v3M426.5 61v4M427.5 65v8M428.5 73v5M429.5 73v3M430.5 71v2M431.5 73v2M432.5 75v2M433.5 75v1M434.5 73v2M435.5 71v2M436.5 68v3M437.5 66v2M438.5 67v1M439.5 67v1M440.5 68v1M441.5 68v1M442.5 68v1M443.5 69v1M444.5 70v1M445.5 71v1M446.5 71v1M447.5 72v1M448.5 72v1M449.5 72v1M450.5 72v1M451.5 72v1M452.5 70v2M453.5 68v2M454.5 69v1M455.5 70v2M456.5 72v1M457.5 70v2M458.5 69v1M459.5 70v1M460.5 71v2M461.5 72v2M462.5 70v2M463.5 71v2M464.5 73v1M465.5 73v1M466.5 73v1M467.5 73v1M468.5 71v2M469.5 69v2M470.5 68v1M471.5 69v1M472.5 69v1M473.5 69v1M474.5 68v1M475.5 66v3M476.5 67v2M477.5 69v1M478.5 70v2M479.5 72v2M480.5 74v2M481.5 73v5M482.5 68v5M483.5 70v3M484.5 73v2M485.5 73v1M486.5 72v1M487.5 71v1M488.5 70v1M489.5 69v1M490.5 70v2M491.5 72v2M492.5 72v3M493.5 68v4M494.5 65v3M495.5 67v2M496.5 69v2M497.5 69v1M498.5 69v1M499.5 65v4M500.5 61v4M501.5 64v4M502.5 68v5M503.5 73v4M504.5 77v3M505.5 79v2M506.5 76v3M507.5 73v3M508.5 69v4M509.5 64v5M510.5 61v3M511.5 64v5M512.5 69v3M513.5 71v1M514.5 71v1M515.5 71v1M516.5 72v2M517.5 74v1M518.5 73v1M519.5 71v2M520.5 69v2M521.5 66v3M522.5 64v2M523.5 66v2M524.5 68v2M525.5 69v1M526.5 69v1M527.5 69v1M528.5 69v3M529.5 72v3M530.5 75v2M531.5 71v4M532.5 69v2M533.5 68v1M534.5 67v1M535.5 66v2M536.5 68v2M537.5 70v2M538.5 72v1M539.5 73v1M540.5 74v1M541.5 72v2M542.5 70v2M543.5 71v1M544.5 71v1M545.5 72v1M546.5 73v1M547.5 74v1M548.5 72v2M549.5 70v2M550.5 68v2M551.5 66v2M552.5 68v2M553.5 70v2M554.5 70v1M555.5 68v2M556.5 67v1M557.5 68v1M558.5 69v1M559.5 70v1M560.5 70v2M561.5 68v2M562.5 67v1M563.5 68v1M564.5 68v1M565.5 66v2M566.5 65v2M567.5 67v4M568.5 71v3M569.5 71v2M570.5 69v2M571.5 68v2M572.5 70v3M573.5 73v5M574.5 78v11M575.5 89v11M576.5 100v4M577.5 99v3M578.5 102v4M579.5 106v8M580.5 114v8M581.5 117v8M582.5 108v9M583.5 112v8M584.5 120v6M585.5 126v6M586.5 132v8M587.5 139v8M588.5 127v12M589.5 117v10M590.5 109v8M591.5 103v6M592.5 99v4M593.5 96v3M594.5 98v4M595.5 102v6M596.5 108v5M597.5 111v1M598.5 110v1M599.5 108v2M600.5 106v3M601.5 109v4M602.5 113v3M603.5 116v2M604.5 118v2M605.5 120v2M606.5 121v3M607.5 117v4M608.5 110v7M609.5 102v8M610.5 98v8M611.5 106v9M612.5 101v9M613.5 93v8M614.5 89v4M615.5 92v6M616.5 98v5M617.5 103v4M618.5 107v2" stroke="#00aaff"/>
</g>
<g class="crisp" id="legend-ticks">
<rect x="620" y="64" width="5" height="1" fill="#fff"/>
<rect x="619" y="78" width="6" height="1" fill="#ff9000"/>
<rect x="619" y="91" width="6" height="1" fill="#ff0000"/>
<rect x="619" y="104" width="6" height="1" fill="#00ff00"/>
<rect x="619" y="117" width="6" height="1" fill="#ff00ff"/>
<rect x="619" y="130" width="6" height="1" fill="#7878ff"/>
<rect x="619" y="143" width="6" height="1" fill="#999999"/>
<rect x="619" y="156" width="6" height="1" fill="#00aaff"/>
</g>
<defs><filter id="bin" x="0" y="0" width="750" height="700" filterUnits="userSpaceOnUse" color-interpolation-filters="sRGB"><feComponentTransfer><feFuncA type="discrete" tableValues="0 1"/></feComponentTransfer></filter></defs>
<g id="labels" filter="url(#bin)">
<text x="295" y="20.5" font-size="16" textLength="161.5" lengthAdjust="spacingAndGlyphs">INCA H TOF Channels</text>
<text x="219.5" y="38.5" font-size="12" textLength="312" lengthAdjust="spacingAndGlyphs">2012-047T00:00:00.000 - 2012-047T23:59:00.000 MIMI/APL</text>
<text x="71.3" y="72.7" font-size="12.4" text-anchor="end">10.000</text>
<text x="71.3" y="120.9" font-size="12.4" text-anchor="end">1.000</text>
<text x="71.3" y="169.10000000000002" font-size="12.4" text-anchor="end">0.100</text>
<text x="71.3" y="217.3" font-size="12.4" text-anchor="end">0.010</text>
<text x="71.3" y="259.5" font-size="12.4" text-anchor="end">0.001</text>
<text x="627.5" y="65" font-size="13" textLength="73.5" lengthAdjust="spacingAndGlyphs" class="bi">227-360 keV</text>
<text x="627.5" y="79" font-size="13" textLength="73.5" lengthAdjust="spacingAndGlyphs" class="bi" style="fill:#ff9000;stroke:#ff9000">149-227 keV</text>
<text x="627.5" y="92" font-size="13" textLength="66" lengthAdjust="spacingAndGlyphs" class="bi" style="fill:#ff0000;stroke:#ff0000">90-149 keV</text>
<text x="627.5" y="105" font-size="13" textLength="58.5" lengthAdjust="spacingAndGlyphs" class="bi" style="fill:#00ff00;stroke:#00ff00">55-90 keV</text>
<text x="627.5" y="118" font-size="13" textLength="58.5" lengthAdjust="spacingAndGlyphs" class="bi" style="fill:#ff00ff;stroke:#ff00ff">35-55 keV</text>
<text x="627.5" y="131" font-size="13" textLength="58.5" lengthAdjust="spacingAndGlyphs" class="bi" style="fill:#7878ff;stroke:#7878ff">24-35 keV</text>
<text x="627.5" y="144" font-size="13" textLength="58.5" lengthAdjust="spacingAndGlyphs" class="bi" style="fill:#999999;stroke:#999999">13-24 keV</text>
<text x="627.5" y="157" font-size="13" textLength="51" lengthAdjust="spacingAndGlyphs" class="bi" style="fill:#00aaff;stroke:#00aaff">5-13 keV</text>
<text x="628" y="278" font-size="11" textLength="24.5" lengthAdjust="spacingAndGlyphs" style="fill:#50b000;stroke:#50b000">InCal</text>
<text x="628" y="293" font-size="11" textLength="83" lengthAdjust="spacingAndGlyphs" style="fill:#ff0000;stroke:#ff0000">OutCal:UnPlaned</text>
<text x="628" y="308" font-size="11" textLength="69" lengthAdjust="spacingAndGlyphs" style="fill:#7878ff;stroke:#7878ff">OutCal:Planed</text>
<text x="628" y="321" font-size="11" textLength="47" lengthAdjust="spacingAndGlyphs" style="fill:#999999;stroke:#999999">NeuMode</text>
<text x="628" y="336" font-size="11" textLength="42" lengthAdjust="spacingAndGlyphs" style="fill:#00ff00;stroke:#00ff00">IonMode</text>
<text x="628" y="351" font-size="11" textLength="48" lengthAdjust="spacingAndGlyphs" style="fill:#ff00ff;stroke:#ff00ff">IonMode2</text>
<text x="628" y="368.7" font-size="12.5" textLength="62" lengthAdjust="spacingAndGlyphs">Spin/P_CK</text>
<text x="628" y="387.3" font-size="12.5" textLength="66.5" lengthAdjust="spacingAndGlyphs">-X_toSaturn</text>
<text x="628" y="405.9" font-size="12.5" textLength="66.5" lengthAdjust="spacingAndGlyphs">-Y_toSaturn</text>
<text x="628" y="424.4" font-size="12.5" textLength="66.5" lengthAdjust="spacingAndGlyphs">-Z_toSaturn</text>
<text x="628" y="443.0" font-size="12.5" textLength="52" lengthAdjust="spacingAndGlyphs">-X_toSun</text>
<text x="628" y="461.6" font-size="12.5" textLength="52" lengthAdjust="spacingAndGlyphs">-Y_toSun</text>
<text x="628" y="480.2" font-size="12.5" textLength="52" lengthAdjust="spacingAndGlyphs">-Z_toSun</text>
<text x="628" y="498.8" font-size="12.5" textLength="55" lengthAdjust="spacingAndGlyphs">-X_toNEP</text>
<text x="628" y="517.3" font-size="12.5" textLength="55" lengthAdjust="spacingAndGlyphs">-Y_toNEP</text>
<text x="628" y="535.9" font-size="12.5" textLength="55" lengthAdjust="spacingAndGlyphs">-Z_toNEP</text>
<text x="62" y="377" font-size="10.5" text-anchor="middle" textLength="20.5" lengthAdjust="spacingAndGlyphs">180°</text>
<text x="61.5" y="396" font-size="10.5" text-anchor="middle" textLength="9.5" lengthAdjust="spacingAndGlyphs">0°</text>
<text x="62" y="526" font-size="10.5" text-anchor="middle" textLength="20.5" lengthAdjust="spacingAndGlyphs">100°</text>
<text x="61.5" y="544.5" font-size="10.5" text-anchor="middle" textLength="9.5" lengthAdjust="spacingAndGlyphs">0°</text>
<text transform="translate(21.8,182.3) rotate(-90)" font-size="15.5" class="b" textLength="53" lengthAdjust="spacingAndGlyphs">Log Cnts</text>
<text transform="translate(37,199) rotate(-90)" font-size="14" textLength="83" lengthAdjust="spacingAndGlyphs">(cm<tspan font-size="8" dy="-6">2</tspan><tspan dy="6">-sr-s-keV)</tspan><tspan font-size="8" dy="-7">-1</tspan></text>
<text transform="translate(39,335) rotate(-90)" font-size="12.5" textLength="54.5" lengthAdjust="spacingAndGlyphs">INCA Mode</text>
<text transform="translate(39,493) rotate(-90)" font-size="15" textLength="88" lengthAdjust="spacingAndGlyphs">Cassini Attitude</text>
<text x="75.5" y="565.5" font-size="12.7" text-anchor="middle">00:00</text>
<text x="211.5" y="565.5" font-size="12.7" text-anchor="middle">06:00</text>
<text x="347.5" y="565.5" font-size="12.7" text-anchor="middle">12:00</text>
<text x="483.5" y="565.5" font-size="12.7" text-anchor="middle">18:00</text>
<text x="75.5" y="596.5" font-size="12.7" text-anchor="middle">37.66</text>
<text x="211.5" y="596.5" font-size="12.7" text-anchor="middle">36.77</text>
<text x="347.5" y="596.5" font-size="12.7" text-anchor="middle">35.83</text>
<text x="483.5" y="596.5" font-size="12.7" text-anchor="middle">34.84</text>
<text x="75.5" y="612.5" font-size="12.7" text-anchor="middle">-0.15</text>
<text x="211.5" y="612.5" font-size="12.7" text-anchor="middle">-0.12</text>
<text x="347.5" y="612.5" font-size="12.7" text-anchor="middle">-0.09</text>
<text x="483.5" y="612.5" font-size="12.7" text-anchor="middle">-0.06</text>
<text x="75.5" y="627.5" font-size="12.7" text-anchor="middle">1650</text>
<text x="211.5" y="627.5" font-size="12.7" text-anchor="middle">1654</text>
<text x="347.5" y="627.5" font-size="12.7" text-anchor="middle">1658</text>
<text x="483.5" y="627.5" font-size="12.7" text-anchor="middle">1703</text>
<text x="75.5" y="643.5" font-size="12.7" text-anchor="middle">37.66</text>
<text x="211.5" y="643.5" font-size="12.7" text-anchor="middle">36.77</text>
<text x="347.5" y="643.5" font-size="12.7" text-anchor="middle">35.83</text>
<text x="483.5" y="643.5" font-size="12.7" text-anchor="middle">34.84</text>
<text x="8" y="573.5" font-size="12.5">UTC</text>
<text x="8" y="604.5" font-size="12">R</text>
<text x="17" y="613.5" font-size="12" textLength="28" lengthAdjust="spacingAndGlyphs">satur</text>
<text x="8" y="620.5" font-size="12">Lat</text>
<text x="8" y="635.5" font-size="12">LT</text>
<text x="8" y="651.5" font-size="12">L</text>
<text x="15" y="660.5" font-size="12" textLength="35" lengthAdjust="spacingAndGlyphs">saturn</text>
<text x="319" y="688" font-size="11" textLength="113" lengthAdjust="spacingAndGlyphs">Background Subtracted</text>
<text x="569" y="688" font-size="11" textLength="66" lengthAdjust="spacingAndGlyphs">in Stare Mode</text>
</g>
</svg>
</body>
</html>
